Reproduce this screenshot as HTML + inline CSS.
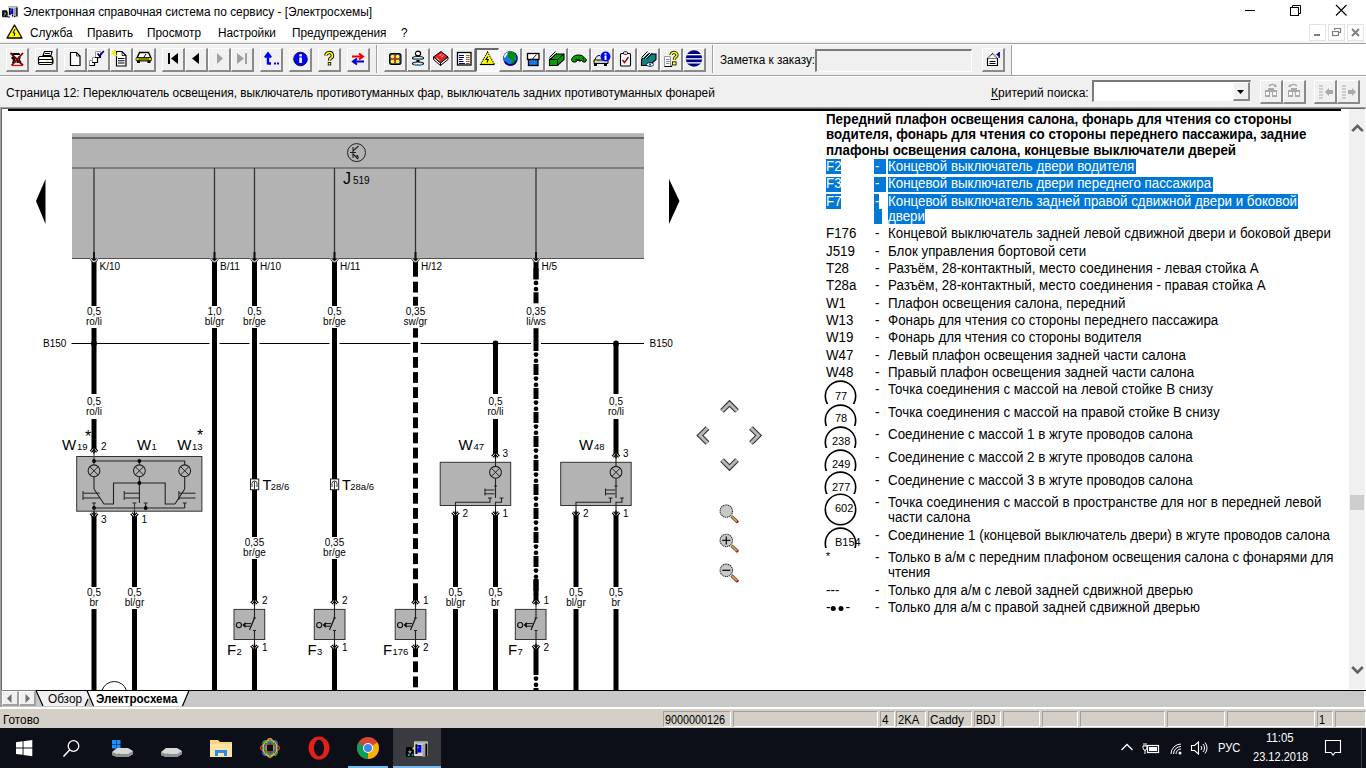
<!DOCTYPE html><html><head><meta charset="utf-8"><style>
html,body{margin:0;padding:0;width:1366px;height:768px;overflow:hidden;background:#fff;font-family:"Liberation Sans",sans-serif}
</style></head><body><div style="position:absolute;left:0px;top:0px;width:1366px;height:41px;background:#fff"></div>
<div style="position:absolute;left:0px;top:41px;width:1366px;height:2px;background:#f4f4f4"></div>
<div style="position:absolute;left:0px;top:43px;width:1366px;height:1px;background:#a0a0a0"></div>
<div style="position:absolute;left:0px;top:44px;width:1366px;height:1px;background:#fff"></div>
<div style="position:absolute;left:0px;top:45px;width:1366px;height:30px;background:#f0f0f0"></div>
<div style="position:absolute;left:1012px;top:45px;width:354px;height:30px;background:#fff"></div>
<div style="position:absolute;left:0px;top:75px;width:1366px;height:1px;background:#a0a0a0"></div>
<div style="position:absolute;left:0px;top:76px;width:1366px;height:1px;background:#fff"></div>
<div style="position:absolute;left:0px;top:77px;width:1366px;height:30px;background:#f0f0f0"></div>
<div style="position:absolute;left:0px;top:107px;width:1366px;height:1px;background:#a0a0a0"></div>
<div style="position:absolute;left:0px;top:108px;width:1366px;height:582px;background:#fff"></div>
<div style="position:absolute;left:1px;top:108px;width:1364px;height:1px;background:#696969"></div>
<div style="position:absolute;left:0px;top:107px;width:1px;height:600px;background:#a0a0a0"></div>
<div style="position:absolute;left:1px;top:108px;width:1px;height:582px;background:#696969"></div>
<div style="position:absolute;left:1px;top:690px;width:1px;height:17px;background:#a0a0a0"></div>
<svg style="position:absolute;left:0px;top:2px;" width="22" height="18" viewBox="0 0 22 18"><rect x="8" y="4" width="10" height="10.5" fill="#d8d8d8"/><rect x="8.5" y="4" width="9" height="1.5" fill="#b0b0b0"/>
<rect x="9" y="6" width="1.5" height="7" fill="#000"/><rect x="10.3" y="6.5" width="3" height="5.5" fill="#0000f0"/><rect x="10.5" y="7.8" width="1" height="1" fill="#3cf"/>
<rect x="14" y="6" width="2" height="9" fill="#a0a0a0"/><rect x="16.2" y="5.5" width="1.4" height="9" fill="#000"/><rect x="12" y="12.5" width="1.2" height="2" fill="#000"/><rect x="14" y="14" width="1.2" height="1.2" fill="#000"/>
<path d="M2.2 8.2h4.5l1 1v4.5l1 1.5H2.5l-.5-1.5z" fill="#000"/><path d="M5 9.5l.5 1.3 1.2.3-1 .7.3 1.2-1-.6-1 .6.3-1.2-1-.7 1.2-.3z" fill="#888"/>
<rect x="7" y="8.3" width="1.6" height="1.4" fill="#ff0"/><rect x="3.5" y="13.2" width="1.3" height="1.2" fill="#2cd"/><rect x="6.3" y="13.2" width="1.3" height="1.2" fill="#2a8"/><rect x="8" y="14.5" width="2" height="1" fill="#408"/></svg>
<div style="position:absolute;left:23px;top:5.84px;font-size:12px;line-height:1;font-weight:400;color:#000;white-space:pre;transform:scaleX(0.99);transform-origin:0 0;">Электронная справочная система по сервису - [Электросхемы]</div>
<div style="position:absolute;left:1245px;top:10px;width:10px;height:1px;background:#000"></div>
<svg style="position:absolute;left:1289px;top:4px;" width="13" height="13" viewBox="0 0 13 13"><rect x="1.5" y="3.5" width="8" height="8" fill="none" stroke="#000"/><path d="M3.5 3.5V1.5h8v8h-2" fill="none" stroke="#000"/></svg>
<svg style="position:absolute;left:1335px;top:4px;" width="13" height="13" viewBox="0 0 13 13"><path d="M1 1L11.5 11.5M11.5 1L1 11.5" stroke="#000" stroke-width="1.1"/></svg>
<svg style="position:absolute;left:6px;top:24px;" width="17" height="15" viewBox="0 0 17 15"><path d="M8.5 1L16 14H1z" fill="#ffff00" stroke="#000" stroke-width="1.3" stroke-linejoin="round"/><path d="M9 5l-2 4h2l-1 3" stroke="#000" fill="none" stroke-width="1"/></svg>
<div style="position:absolute;left:30px;top:27.04px;font-size:12px;line-height:1;font-weight:400;color:#000;white-space:pre;transform:scaleX(0.985);transform-origin:0 0;">Служба</div>
<div style="position:absolute;left:87px;top:27.04px;font-size:12px;line-height:1;font-weight:400;color:#000;white-space:pre;transform:scaleX(0.985);transform-origin:0 0;">Править</div>
<div style="position:absolute;left:147px;top:27.04px;font-size:12px;line-height:1;font-weight:400;color:#000;white-space:pre;transform:scaleX(0.985);transform-origin:0 0;">Просмотр</div>
<div style="position:absolute;left:218px;top:27.04px;font-size:12px;line-height:1;font-weight:400;color:#000;white-space:pre;transform:scaleX(0.985);transform-origin:0 0;">Настройки</div>
<div style="position:absolute;left:292px;top:27.04px;font-size:12px;line-height:1;font-weight:400;color:#000;white-space:pre;transform:scaleX(0.985);transform-origin:0 0;">Предупреждения</div>
<div style="position:absolute;left:401px;top:27.04px;font-size:12px;line-height:1;font-weight:400;color:#000;white-space:pre;transform:scaleX(0.985);transform-origin:0 0;">?</div>
<div style="position:absolute;left:1309px;top:24px;width:17px;height:17px;box-sizing:border-box;border:1px solid #e3e3e3;background:#fff"></div>
<div style="position:absolute;left:1328px;top:24px;width:17px;height:17px;box-sizing:border-box;border:1px solid #e3e3e3;background:#fff"></div>
<div style="position:absolute;left:1347px;top:24px;width:17px;height:17px;box-sizing:border-box;border:1px solid #e3e3e3;background:#fff"></div>
<svg style="position:absolute;left:1309px;top:24px;" width="17" height="17" viewBox="0 0 17 17"><rect x="5" y="10" width="6" height="2" fill="#808080"/></svg>
<svg style="position:absolute;left:1328px;top:24px;" width="17" height="17" viewBox="0 0 17 17"><rect x="4.5" y="7.5" width="6" height="4" fill="none" stroke="#808080" stroke-width="1.2"/><path d="M6.5 6V4.5h6v4h-2" fill="none" stroke="#808080" stroke-width="1.2"/></svg>
<svg style="position:absolute;left:1347px;top:24px;" width="17" height="17" viewBox="0 0 17 17"><path d="M5 5l7 7M12 5l-7 7" stroke="#808080" stroke-width="2"/></svg>
<div style="position:absolute;left:6px;top:48px;width:23px;height:24px;box-sizing:border-box;background:#f0f0f0;border-top:1px solid #fff;border-left:1px solid #fff;border-right:2px solid #8a8a8a;border-bottom:2px solid #8a8a8a"></div>
<svg style="position:absolute;left:6px;top:48px;" width="23" height="23" viewBox="0 0 23 23"><path d="M6 5h7l1 1v1H9l-1 2 2 1-1 2 3 1 1 2H6l1-3-2-2 2-2z" fill="#000"/><path d="M8 7.5h3M9 11h2M8 14h3" stroke="#fff" stroke-width="1"/><path d="M12 9l2 1-1 2 2 2" stroke="#000" stroke-width="1.2" fill="none"/><path d="M4.5 5L17 17.5M17 5L5.5 17.5" stroke="#800000" stroke-width="1.8"/><path d="M6 17.5h10" stroke="#f00" stroke-width="1.2"/></svg>
<div style="position:absolute;left:35px;top:48px;width:23px;height:24px;box-sizing:border-box;background:#f0f0f0;border-top:1px solid #fff;border-left:1px solid #fff;border-right:2px solid #8a8a8a;border-bottom:2px solid #8a8a8a"></div>
<svg style="position:absolute;left:35px;top:48px;" width="23" height="23" viewBox="0 0 23 23"><path d="M9.5 3.5h7.5l-1 4h-8z" fill="#fff" stroke="#000" stroke-width="1.1"/><path d="M10 5.5h5" stroke="#000"/><rect x="3.5" y="8.5" width="14" height="8" rx="1.5" fill="#fff" stroke="#000" stroke-width="1.2"/><path d="M4 11.5h13M4 14.5h13" stroke="#000" stroke-width="1.2"/><path d="M11 13h3" stroke="#ee0" stroke-width="1.3"/><path d="M16 9.5l2 2v4" stroke="#000" fill="none"/></svg>
<div style="position:absolute;left:64px;top:48px;width:23px;height:24px;box-sizing:border-box;background:#f0f0f0;border-top:1px solid #fff;border-left:1px solid #fff;border-right:2px solid #8a8a8a;border-bottom:2px solid #8a8a8a"></div>
<svg style="position:absolute;left:64px;top:48px;" width="23" height="23" viewBox="0 0 23 23"><path d="M6.5 4.5h6l3.5 3.5v9.5H6.5z" fill="#fff" stroke="#000" stroke-width="1.2"/><path d="M12.5 4.5V8H16" fill="none" stroke="#000" stroke-width=".8"/></svg>
<div style="position:absolute;left:87px;top:48px;width:23px;height:24px;box-sizing:border-box;background:#f0f0f0;border-top:1px solid #fff;border-left:1px solid #fff;border-right:2px solid #8a8a8a;border-bottom:2px solid #8a8a8a"></div>
<svg style="position:absolute;left:87px;top:48px;" width="23" height="23" viewBox="0 0 23 23"><path d="M2.5 12.5h5v5h-5z" fill="#fff" stroke="#999"/><path d="M2.5 17.5h5v-5" stroke="#000" fill="none" stroke-width="1.2"/><path d="M5.5 9.5h5v5h-5z" fill="#fff" stroke="#999"/><path d="M5 14.5h5.5v-5" stroke="#000" fill="none" stroke-width="1.2"/><path d="M8.5 3.5h5v6h-5z" fill="#fff" stroke="#999"/><path d="M8 9.5h5.5V7" stroke="#000" fill="none" stroke-width="1.2"/><path d="M10.5 5.5l2 2.3 4.3-4.8" stroke="#000080" stroke-width="1.8" fill="none"/></svg>
<div style="position:absolute;left:110px;top:48px;width:23px;height:24px;box-sizing:border-box;background:#f0f0f0;border-top:1px solid #fff;border-left:1px solid #fff;border-right:2px solid #8a8a8a;border-bottom:2px solid #8a8a8a"></div>
<svg style="position:absolute;left:110px;top:48px;" width="23" height="23" viewBox="0 0 23 23"><path d="M6.5 3.5h5.5l4 4v10.5H6.5z" fill="#fff" stroke="#000" stroke-width="1.2"/><path d="M12 3.5V7.5H16" fill="none" stroke="#000" stroke-width=".8"/><path d="M8 10.5h6.5M8 12.8h6.5M8 15h6.5" stroke="#000" stroke-width="1.1"/><path d="M2 3l5 5M6 2L3 7M1.5 5.5h5M4.5 1.5v6" stroke="#f0f000" stroke-width="1.1"/></svg>
<div style="position:absolute;left:133px;top:48px;width:23px;height:24px;box-sizing:border-box;background:#f0f0f0;border-top:1px solid #fff;border-left:1px solid #fff;border-right:2px solid #8a8a8a;border-bottom:2px solid #8a8a8a"></div>
<svg style="position:absolute;left:133px;top:48px;" width="23" height="23" viewBox="0 0 23 23"><path d="M4 10l2.5-5.5h9L18 10" fill="#fff" stroke="#000" stroke-width="1.4"/><path d="M11 9l2-3" stroke="#000"/><rect x="3" y="9.5" width="15.5" height="3.5" rx="1.5" fill="#808000" stroke="#000" stroke-width=".8"/><rect x="3.5" y="10.3" width="2" height="1.5" fill="#ff0"/><rect x="16" y="10.3" width="2" height="1.5" fill="#ff0"/><rect x="4" y="12.5" width="3" height="2.5" fill="#000"/><rect x="14.5" y="12.5" width="3" height="2.5" fill="#000"/></svg>
<div style="position:absolute;left:162px;top:48px;width:23px;height:24px;box-sizing:border-box;background:#f0f0f0;border-top:1px solid #fff;border-left:1px solid #fff;border-right:2px solid #8a8a8a;border-bottom:2px solid #8a8a8a"></div>
<svg style="position:absolute;left:162px;top:48px;" width="23" height="23" viewBox="0 0 23 23"><rect x="6" y="5" width="2" height="11" fill="#000"/><path d="M16 5v11L9 10.5z" fill="#000"/></svg>
<div style="position:absolute;left:185px;top:48px;width:23px;height:24px;box-sizing:border-box;background:#f0f0f0;border-top:1px solid #fff;border-left:1px solid #fff;border-right:2px solid #8a8a8a;border-bottom:2px solid #8a8a8a"></div>
<svg style="position:absolute;left:185px;top:48px;" width="23" height="23" viewBox="0 0 23 23"><path d="M14 5v11L7 10.5z" fill="#000"/></svg>
<div style="position:absolute;left:208px;top:48px;width:23px;height:24px;box-sizing:border-box;background:#f0f0f0;border-top:1px solid #fff;border-left:1px solid #fff;border-right:2px solid #8a8a8a;border-bottom:2px solid #8a8a8a"></div>
<svg style="position:absolute;left:208px;top:48px;" width="23" height="23" viewBox="0 0 23 23"><path d="M9 5v11l6-5.5z" fill="#a0a0a0"/></svg>
<div style="position:absolute;left:231px;top:48px;width:23px;height:24px;box-sizing:border-box;background:#f0f0f0;border-top:1px solid #fff;border-left:1px solid #fff;border-right:2px solid #8a8a8a;border-bottom:2px solid #8a8a8a"></div>
<svg style="position:absolute;left:231px;top:48px;" width="23" height="23" viewBox="0 0 23 23"><path d="M6 5v11l7-5.5z" fill="#a0a0a0"/><rect x="14" y="5" width="2" height="11" fill="#a0a0a0"/></svg>
<div style="position:absolute;left:260px;top:48px;width:23px;height:24px;box-sizing:border-box;background:#f0f0f0;border-top:1px solid #fff;border-left:1px solid #fff;border-right:2px solid #8a8a8a;border-bottom:2px solid #8a8a8a"></div>
<svg style="position:absolute;left:260px;top:48px;" width="23" height="23" viewBox="0 0 23 23"><path d="M8 16.5V6.5M5 9.5l3-4 3 4M8 15.5h3" stroke="#00f" stroke-width="2.4" fill="none"/><rect x="14" y="14.5" width="2" height="2" fill="#00f"/><rect x="17" y="14.5" width="2" height="2" fill="#00f"/></svg>
<div style="position:absolute;left:289px;top:48px;width:23px;height:24px;box-sizing:border-box;background:#f0f0f0;border-top:1px solid #fff;border-left:1px solid #fff;border-right:2px solid #8a8a8a;border-bottom:2px solid #8a8a8a"></div>
<svg style="position:absolute;left:289px;top:48px;" width="23" height="23" viewBox="0 0 23 23"><circle cx="11.5" cy="11" r="6.8" fill="#00f" stroke="#000" stroke-width=".8"/><rect x="10.3" y="9.5" width="2.6" height="5.5" fill="#fff"/><rect x="10.3" y="6.2" width="2.6" height="2.2" fill="#fff"/></svg>
<div style="position:absolute;left:318px;top:48px;width:23px;height:24px;box-sizing:border-box;background:#f0f0f0;border-top:1px solid #fff;border-left:1px solid #fff;border-right:2px solid #8a8a8a;border-bottom:2px solid #8a8a8a"></div>
<svg style="position:absolute;left:318px;top:48px;" width="23" height="23" viewBox="0 0 23 23"><path d="M8 7.5a3.2 3 0 1 1 4.5 2.8c-1 .6-1 1.2-1 2.5" stroke="#000" stroke-width="3.4" fill="none"/><path d="M8 7.5a3.2 3 0 1 1 4.5 2.8c-1 .6-1 1.2-1 2.5" stroke="#ff0" stroke-width="1.6" fill="none"/><rect x="9.8" y="14" width="3.4" height="3.4" fill="#000"/><rect x="10.6" y="14.8" width="1.8" height="1.8" fill="#ff0"/></svg>
<div style="position:absolute;left:347px;top:48px;width:23px;height:24px;box-sizing:border-box;background:#f0f0f0;border-top:1px solid #fff;border-left:1px solid #fff;border-right:2px solid #8a8a8a;border-bottom:2px solid #8a8a8a"></div>
<svg style="position:absolute;left:347px;top:48px;" width="23" height="23" viewBox="0 0 23 23"><path d="M5 8.5h10M12 5.5l4 3-4 3" stroke="#e00" stroke-width="2" fill="none"/><path d="M17 13.5H7M10 10.5l-4 3 4 3" stroke="#00c" stroke-width="2" fill="none"/></svg>
<div style="position:absolute;left:384px;top:48px;width:23px;height:24px;box-sizing:border-box;background:#f0f0f0;border-top:1px solid #fff;border-left:1px solid #fff;border-right:2px solid #8a8a8a;border-bottom:2px solid #8a8a8a"></div>
<svg style="position:absolute;left:384px;top:48px;" width="23" height="23" viewBox="0 0 23 23"><rect x="5" y="5" width="12.5" height="12" rx="2.5" fill="#000"/><rect x="6" y="6" width="10.5" height="10" rx="1.5" fill="#2040a0"/><circle cx="8.6" cy="8.6" r="1.9" fill="#ff0"/><circle cx="13.6" cy="8.6" r="1.9" fill="#ff0"/><circle cx="8.6" cy="13.4" r="1.9" fill="#ff0"/><circle cx="13.6" cy="13.4" r="1.9" fill="#ff0"/><path d="M6 11h10.5M11 6v10" stroke="#e03030" stroke-width="1.2"/></svg>
<div style="position:absolute;left:407px;top:48px;width:23px;height:24px;box-sizing:border-box;background:#f0f0f0;border-top:1px solid #fff;border-left:1px solid #fff;border-right:2px solid #8a8a8a;border-bottom:2px solid #8a8a8a"></div>
<svg style="position:absolute;left:407px;top:48px;" width="23" height="23" viewBox="0 0 23 23"><ellipse cx="11" cy="5.5" rx="2.6" ry="2.3" fill="#fff" stroke="#000" stroke-width="1.2"/><path d="M5.5 10c0-2 11-2 11 0s-11 2-11 0z" fill="#fff" stroke="#000" stroke-width="1.2"/><path d="M7 10.5c2 1 6 1 8 0" stroke="#5ad" stroke-width="1.5"/><ellipse cx="11" cy="13" rx="1.8" ry="1.3" fill="#000"/><path d="M5.5 15.5c0-2 11-2 11 0s-11 2-11 0z" fill="#fff" stroke="#000" stroke-width="1.2"/><path d="M7 16c2 1 6 1 8 0" stroke="#5ad" stroke-width="1.5"/></svg>
<div style="position:absolute;left:430px;top:48px;width:23px;height:24px;box-sizing:border-box;background:#f0f0f0;border-top:1px solid #fff;border-left:1px solid #fff;border-right:2px solid #8a8a8a;border-bottom:2px solid #8a8a8a"></div>
<svg style="position:absolute;left:430px;top:48px;" width="23" height="23" viewBox="0 0 23 23"><path d="M3.5 9L11 3.5l7 5.5-7.5 6z" fill="#e82020" stroke="#000" stroke-width="1"/><path d="M3.5 9v2.5l7 6 7.5-6V9l-7.5 6z" fill="#fff" stroke="#000" stroke-width="1"/><path d="M10.5 15v2.5" stroke="#000"/><path d="M9.5 7.5l2-1.2M11.5 8.8l2-1.2M6.5 10l3 2.5" stroke="#fff" stroke-width=".9"/></svg>
<div style="position:absolute;left:453px;top:48px;width:23px;height:24px;box-sizing:border-box;background:#f0f0f0;border-top:1px solid #fff;border-left:1px solid #fff;border-right:2px solid #8a8a8a;border-bottom:2px solid #8a8a8a"></div>
<svg style="position:absolute;left:453px;top:48px;" width="23" height="23" viewBox="0 0 23 23"><rect x="4.5" y="4.5" width="13.5" height="12.5" fill="#fff" stroke="#000" stroke-width="1.3"/><path d="M6 7.5h5M6 9.5h5M6 11.5h3.5M6 13.5h4.5M6 15.5h6" stroke="#000080" stroke-width="1.1"/><path d="M13 7.5h1.5M13 9.5h1.5M13 11.5h1.5M13 13.5h1.5" stroke="#00a000" stroke-width="1.1"/><path d="M14.5 7.5h2M14.5 9.5h2M14.5 11.5h2M14.5 13.5h2M13 15.5h3.5" stroke="#e02020" stroke-width="1.1"/></svg>
<div style="position:absolute;left:475px;top:48px;width:24px;height:24px;box-sizing:border-box;background:#f8f8f8;border-top:2px solid #696969;border-left:2px solid #696969;border-right:1px solid #fff;border-bottom:1px solid #fff"></div>
<svg style="position:absolute;left:476px;top:48px;" width="23" height="23" viewBox="0 0 23 23"><path d="M11.5 4l7 12.5H4.5z" fill="#ff0" stroke="#000" stroke-width="1.1" stroke-dasharray="1.2 .9"/><path d="M4.5 16.5h14" stroke="#000" stroke-width="1.2"/><path d="M12 8.5l-2 3h2.2l-1.2 3" stroke="#000" fill="none" stroke-width="1.1"/></svg>
<div style="position:absolute;left:499px;top:48px;width:23px;height:24px;box-sizing:border-box;background:#f0f0f0;border-top:1px solid #fff;border-left:1px solid #fff;border-right:2px solid #8a8a8a;border-bottom:2px solid #8a8a8a"></div>
<svg style="position:absolute;left:499px;top:48px;" width="23" height="23" viewBox="0 0 23 23"><circle cx="11.5" cy="10.5" r="7.3" fill="#000080"/><circle cx="11" cy="10" r="6.5" fill="#1878e8"/><path d="M9 4.5c2-1 5-1 7 1l1 3-2 2 1 2-2 3-2-1 1-3-3-1-1-2z" fill="#009000"/><path d="M4.8 9.5a6.5 6.5 0 0 1 4-5.2l-1 3-2 2.5z" fill="#fff"/><path d="M6 14c2 3 6 3.5 9 2l2-3" stroke="#000080" stroke-width="1.5" fill="none"/></svg>
<div style="position:absolute;left:522px;top:48px;width:23px;height:24px;box-sizing:border-box;background:#f0f0f0;border-top:1px solid #fff;border-left:1px solid #fff;border-right:2px solid #8a8a8a;border-bottom:2px solid #8a8a8a"></div>
<svg style="position:absolute;left:522px;top:48px;" width="23" height="23" viewBox="0 0 23 23"><rect x="5.5" y="5.5" width="11.5" height="6" fill="#fff" stroke="#000" stroke-width="1.3"/><path d="M10.5 11l4-4.5" stroke="#000" stroke-width=".9"/><rect x="6.5" y="11.5" width="9.5" height="6" fill="#1878e8" stroke="#000" stroke-width="1.3"/></svg>
<div style="position:absolute;left:545px;top:48px;width:23px;height:24px;box-sizing:border-box;background:#f0f0f0;border-top:1px solid #fff;border-left:1px solid #fff;border-right:2px solid #8a8a8a;border-bottom:2px solid #8a8a8a"></div>
<svg style="position:absolute;left:545px;top:48px;" width="23" height="23" viewBox="0 0 23 23"><path d="M4.5 11.5l6-5.5h8.5v5.5l-6.5 6h-8z" fill="#00a000" stroke="#000" stroke-width="1.1"/><path d="M4.5 11.5h8l6.5-5.5M12.5 11.5v6" stroke="#000" fill="none" stroke-width="1"/><path d="M4.5 9.5l6-6M6 11l6-6" stroke="#000" stroke-width="1"/><path d="M5.2 10.2l6-6" stroke="#fff" stroke-width=".9"/></svg>
<div style="position:absolute;left:568px;top:48px;width:23px;height:24px;box-sizing:border-box;background:#f0f0f0;border-top:1px solid #fff;border-left:1px solid #fff;border-right:2px solid #8a8a8a;border-bottom:2px solid #8a8a8a"></div>
<svg style="position:absolute;left:568px;top:48px;" width="23" height="23" viewBox="0 0 23 23"><path d="M3.5 12.5c0-3 2.5-5.5 7-5.5 3.5 0 5 1.5 6.5 3.5l1.5 1-1 2.5h-2.5l-1-1.5h-5l-1 1.5H5z" fill="#00a000" stroke="#000" stroke-width="1"/><path d="M7 11.5h2.5v1.5M11 10.5v2.5h2M14.5 10.5l1.5 1" stroke="#000" stroke-width="1" fill="none"/></svg>
<div style="position:absolute;left:591px;top:48px;width:23px;height:24px;box-sizing:border-box;background:#f0f0f0;border-top:1px solid #fff;border-left:1px solid #fff;border-right:2px solid #8a8a8a;border-bottom:2px solid #8a8a8a"></div>
<svg style="position:absolute;left:591px;top:48px;" width="23" height="23" viewBox="0 0 23 23"><path d="M3.5 13l1.5-3.5c1-2 3-2 4-2" stroke="#000" fill="none" stroke-width="1"/><path d="M3 12h14v3.5H3z" fill="#c8c8c8" stroke="#000" stroke-width="1"/><rect x="4" y="12.5" width="1.5" height="1.3" fill="#ff0"/><rect x="14" y="12.5" width="1.5" height="1.3" fill="#ff0"/><rect x="3" y="15.5" width="3" height="2.5" fill="#000"/><rect x="13" y="15.5" width="3" height="2.5" fill="#000"/><circle cx="14.5" cy="8.5" r="5" fill="#0000f0"/><rect x="13.5" y="7.5" width="2" height="4.5" fill="#fff"/><rect x="13.5" y="5" width="2" height="1.6" fill="#fff"/></svg>
<div style="position:absolute;left:614px;top:48px;width:23px;height:24px;box-sizing:border-box;background:#f0f0f0;border-top:1px solid #fff;border-left:1px solid #fff;border-right:2px solid #8a8a8a;border-bottom:2px solid #8a8a8a"></div>
<svg style="position:absolute;left:614px;top:48px;" width="23" height="23" viewBox="0 0 23 23"><rect x="6.5" y="5.5" width="10" height="12.5" rx="1" fill="#fff" stroke="#000" stroke-width="1.1"/><rect x="9.5" y="3.8" width="4" height="2.5" rx=".8" fill="#fff" stroke="#000" stroke-width=".9"/><path d="M8.5 12l2 2.5 4-5.5" stroke="#a00000" stroke-width="1.4" fill="none"/></svg>
<div style="position:absolute;left:637px;top:48px;width:23px;height:24px;box-sizing:border-box;background:#f0f0f0;border-top:1px solid #fff;border-left:1px solid #fff;border-right:2px solid #8a8a8a;border-bottom:2px solid #8a8a8a"></div>
<svg style="position:absolute;left:637px;top:48px;" width="23" height="23" viewBox="0 0 23 23"><path d="M4.5 11.5l6-5.5h8.5v5.5l-6.5 6h-8z" fill="#108080" stroke="#000" stroke-width="1.1"/><path d="M4.5 9.5l6-6M7 11l6-6M9.5 11l6-6" stroke="#000" stroke-width="1"/><path d="M6 10l6-6M8.5 10.5l6-6" stroke="#e0e0e0" stroke-width="1"/><path d="M9 16.5c2-2.5 6-2.5 8 0-2 2.5-6 2.5-8 0z" fill="#fff" stroke="#000" stroke-width=".8"/><rect x="12" y="15.5" width="2" height="2" fill="#0060e0"/></svg>
<div style="position:absolute;left:660px;top:48px;width:23px;height:24px;box-sizing:border-box;background:#f0f0f0;border-top:1px solid #fff;border-left:1px solid #fff;border-right:2px solid #8a8a8a;border-bottom:2px solid #8a8a8a"></div>
<svg style="position:absolute;left:660px;top:48px;" width="23" height="23" viewBox="0 0 23 23"><path d="M4.5 8.5h6v10h-6z" fill="#fff" stroke="#999" stroke-width="1"/><path d="M4.5 18.5h7v-1" stroke="#000" stroke-width="1.2" fill="none"/><path d="M6 11.5h3.5M6 13.5h3.5M6 15.5h3.5" stroke="#888" stroke-width="1"/><path d="M11 7a3 2.6 0 1 1 4.5 2.3c-1 .6-1.2 1.2-1.2 2.5" stroke="#000" stroke-width="3.2" fill="none"/><path d="M11 7a3 2.6 0 1 1 4.5 2.3c-1 .6-1.2 1.2-1.2 2.5" stroke="#ff0" stroke-width="1.6" fill="none"/><rect x="12.5" y="13.8" width="3.6" height="3.2" fill="#ff0" stroke="#000" stroke-width=".8"/></svg>
<div style="position:absolute;left:683px;top:48px;width:23px;height:24px;box-sizing:border-box;background:#f0f0f0;border-top:1px solid #fff;border-left:1px solid #fff;border-right:2px solid #8a8a8a;border-bottom:2px solid #8a8a8a"></div>
<svg style="position:absolute;left:683px;top:48px;" width="23" height="23" viewBox="0 0 23 23"><clipPath id="cg"><circle cx="11" cy="10.5" r="8.2"/></clipPath><g clip-path="url(#cg)"><rect x="2" y="2" width="18" height="17" fill="#000080"/><rect x="2" y="6" width="18" height="1.3" fill="#fff"/><rect x="2" y="10.2" width="18" height="1.3" fill="#fff"/><rect x="2" y="14.2" width="18" height="1.3" fill="#fff"/></g></svg>
<div style="position:absolute;left:376px;top:45px;width:1px;height:28px;background:#a0a0a0"></div>
<div style="position:absolute;left:377px;top:45px;width:1px;height:28px;background:#fff"></div>
<div style="position:absolute;left:712px;top:45px;width:1px;height:28px;background:#a0a0a0"></div>
<div style="position:absolute;left:713px;top:45px;width:1px;height:28px;background:#fff"></div>
<div style="position:absolute;left:720px;top:53.84px;font-size:12px;line-height:1;font-weight:400;color:#000;white-space:pre;transform:scaleX(0.98);transform-origin:0 0;">Заметка к заказу:</div>
<div style="position:absolute;left:815px;top:49px;width:157px;height:23px;box-sizing:border-box;background:#f0f0f0;border-top:2px solid #7a7a7a;border-left:2px solid #7a7a7a;border-right:1px solid #fff;border-bottom:1px solid #fff"></div>
<div style="position:absolute;left:982px;top:48px;width:23px;height:24px;box-sizing:border-box;background:#f0f0f0;border-top:1px solid #fff;border-left:1px solid #fff;border-right:2px solid #8a8a8a;border-bottom:2px solid #8a8a8a"></div>
<svg style="position:absolute;left:982px;top:48px;" width="23" height="23" viewBox="0 0 23 23"><path d="M5.5 10.5h10v7h-10z" fill="#fff" stroke="#000" stroke-width="1.1"/><path d="M7.5 13.5h6M7.5 15.5h6" stroke="#000" stroke-width="1"/><path d="M5.5 10.5l5-5 5 5" fill="#fff" stroke="#000" stroke-width="1.1" stroke-dasharray="1 .7"/><path d="M14 6.5l3.5-2.5v5z" fill="#000080"/><rect x="16.5" y="4" width="1.3" height="6" fill="#000080"/></svg>
<div style="position:absolute;left:1011px;top:45px;width:1px;height:30px;background:#a0a0a0"></div>
<div style="position:absolute;left:6px;top:86.84px;font-size:12px;line-height:1;font-weight:400;color:#000;white-space:pre;transform:scaleX(0.989);transform-origin:0 0;">Страница 12: Переключатель освещения, выключатель противотуманных фар, выключатель задних противотуманных фонарей</div>
<div style="position:absolute;left:991px;top:86.84px;font-size:12px;line-height:1;font-weight:400;color:#000;white-space:pre;transform:scaleX(1.005);transform-origin:0 0;">Критерий поиска:</div>
<div style="position:absolute;left:991px;top:98.5px;width:7px;height:1px;background:#000"></div>
<div style="position:absolute;left:1092px;top:80px;width:159px;height:22px;box-sizing:border-box;background:#fff;border-top:2px solid #7a7a7a;border-left:2px solid #7a7a7a;border-right:1px solid #f0f0f0;border-bottom:1px solid #f0f0f0"></div>
<div style="position:absolute;left:1233px;top:82px;width:17px;height:19px;box-sizing:border-box;background:#f0f0f0;border-top:1px solid #fff;border-left:1px solid #fff;border-right:2px solid #8a8a8a;border-bottom:2px solid #8a8a8a"></div>
<svg style="position:absolute;left:1233px;top:82px;" width="17" height="19" viewBox="0 0 17 19"><path d="M4 8h7l-3.5 4z" fill="#000"/></svg>
<div style="position:absolute;left:1260px;top:80px;width:23px;height:24px;box-sizing:border-box;background:#f0f0f0;border-top:1px solid #fff;border-left:1px solid #fff;border-right:2px solid #8a8a8a;border-bottom:2px solid #8a8a8a"></div>
<div style="position:absolute;left:1283px;top:80px;width:23px;height:24px;box-sizing:border-box;background:#f0f0f0;border-top:1px solid #fff;border-left:1px solid #fff;border-right:2px solid #8a8a8a;border-bottom:2px solid #8a8a8a"></div>
<div style="position:absolute;left:1314px;top:80px;width:23px;height:24px;box-sizing:border-box;background:#f0f0f0;border-top:1px solid #fff;border-left:1px solid #fff;border-right:2px solid #8a8a8a;border-bottom:2px solid #8a8a8a"></div>
<div style="position:absolute;left:1337px;top:80px;width:23px;height:24px;box-sizing:border-box;background:#f0f0f0;border-top:1px solid #fff;border-left:1px solid #fff;border-right:2px solid #8a8a8a;border-bottom:2px solid #8a8a8a"></div>
<svg style="position:absolute;left:1260px;top:80px;" width="23" height="23" viewBox="0 0 23 23"><rect x="5" y="10" width="5" height="7" fill="#aaa"/><rect x="12" y="10" width="5" height="7" fill="#aaa"/><rect x="8" y="8" width="6" height="4" fill="#aaa"/><rect x="6" y="12" width="3" height="3" fill="#fff"/><rect x="13" y="12" width="3" height="3" fill="#fff"/><path d="M9 6a4 3 0 0 1 7 0" stroke="#aaa" stroke-width="1.5" fill="none"/><path d="M15 4l2 3-3 0z" fill="#aaa"/></svg>
<svg style="position:absolute;left:1283px;top:80px;" width="23" height="23" viewBox="0 0 23 23"><rect x="5" y="10" width="5" height="7" fill="#aaa"/><rect x="12" y="10" width="5" height="7" fill="#aaa"/><rect x="8" y="8" width="6" height="4" fill="#aaa"/><rect x="6" y="12" width="3" height="3" fill="#fff"/><rect x="13" y="12" width="3" height="3" fill="#fff"/><path d="M7 6a4 3 0 0 1 7 0" stroke="#aaa" stroke-width="1.5" fill="none"/><path d="M7 4l-2 3 3 0z" fill="#aaa"/></svg>
<svg style="position:absolute;left:1314px;top:80px;" width="23" height="23" viewBox="0 0 23 23"><path d="M5 6h4M5 9h4M5 12h4M5 15h4M5 18h4" stroke="#aaa"/><path d="M11 12l4-4v2h4v4h-4v2z" fill="#aaa"/></svg>
<svg style="position:absolute;left:1337px;top:80px;" width="23" height="23" viewBox="0 0 23 23"><path d="M5 6h4M5 9h4M5 12h4M5 15h4M5 18h4" stroke="#aaa"/><path d="M19 12l-4-4v2h-4v4h4v2z" fill="#aaa"/></svg>
<div style="position:absolute;left:8px;top:109px;width:1333px;height:2px;background:#000"></div>
<div style="position:absolute;left:1349px;top:109px;width:16px;height:580px;background:#f0f0f0"></div>
<svg style="position:absolute;left:1349px;top:120px;" width="16" height="16" viewBox="0 0 16 16"><path d="M3.2 11.2L8.5 5.8l5.3 5.4" stroke="#606060" stroke-width="2.6" fill="none"/></svg>
<svg style="position:absolute;left:1349px;top:662px;" width="16" height="16" viewBox="0 0 16 16"><path d="M3.2 5L8.5 10.4l5.3-5.4" stroke="#606060" stroke-width="2.6" fill="none"/></svg>
<div style="position:absolute;left:1350px;top:495px;width:14px;height:15px;background:#cdcdd0"></div>
<svg style="position:absolute;left:0;top:0" width="1366" height="768" viewBox="0 0 1366 768" font-family="Liberation Sans, sans-serif"><defs><clipPath id="cp"><rect x="2" y="111" width="810" height="579"/></clipPath></defs><g clip-path="url(#cp)"><rect x="72" y="133.5" width="572" height="125.5" fill="#b3b3b3"/><rect x="72" y="133" width="572" height="1" fill="#c4c4c4"/><line x1="72" y1="137.9" x2="644" y2="137.9" stroke="#505050" stroke-width="1.5"/><line x1="72" y1="168" x2="644" y2="168" stroke="#4a4a4a" stroke-width="1.2"/><line x1="72" y1="258.5" x2="644" y2="258.5" stroke="#505050" stroke-width="1"/><circle cx="356.5" cy="152.6" r="9" fill="none" stroke="#222" stroke-width="1"/><path d="M350 152.5h6M353 147v11M353 151l5.5-5M353 154l5 5" stroke="#222" stroke-width="1.1" fill="none"/><path d="M355.5 155.5l3.5 3.5-1-4z" fill="#222"/><text x="343" y="184.4" font-size="16" fill="#000">J</text><text x="353" y="184.4" font-size="10" fill="#000">519</text><line x1="94" y1="168" x2="94" y2="259" stroke="#333" stroke-width="1.3"/><text x="99.5" y="269.5" font-size="10" text-anchor="start" fill="#000">K/10</text><line x1="214.5" y1="168" x2="214.5" y2="259" stroke="#333" stroke-width="1.3"/><text x="220.0" y="269.5" font-size="10" text-anchor="start" fill="#000">B/11</text><line x1="254.5" y1="168" x2="254.5" y2="259" stroke="#333" stroke-width="1.3"/><text x="260.0" y="269.5" font-size="10" text-anchor="start" fill="#000">H/10</text><line x1="334.5" y1="168" x2="334.5" y2="259" stroke="#333" stroke-width="1.3"/><text x="340.0" y="269.5" font-size="10" text-anchor="start" fill="#000">H/11</text><line x1="415.5" y1="168" x2="415.5" y2="259" stroke="#333" stroke-width="1.3"/><text x="421.0" y="269.5" font-size="10" text-anchor="start" fill="#000">H/12</text><line x1="536" y1="168" x2="536" y2="259" stroke="#333" stroke-width="1.3"/><text x="541.5" y="269.5" font-size="10" text-anchor="start" fill="#000">H/5</text><path d="M36 201L45.5 179V224z" fill="#000"/><path d="M679.5 201L669 179V224z" fill="#000"/><line x1="71.5" y1="343.5" x2="209.5" y2="343.5" stroke="#000" stroke-width="1"/><line x1="219.5" y1="343.5" x2="249.5" y2="343.5" stroke="#000" stroke-width="1"/><line x1="259.5" y1="343.5" x2="329.5" y2="343.5" stroke="#000" stroke-width="1"/><line x1="339.5" y1="343.5" x2="410.5" y2="343.5" stroke="#000" stroke-width="1"/><line x1="420.5" y1="343.5" x2="531" y2="343.5" stroke="#000" stroke-width="1"/><line x1="541" y1="343.5" x2="644" y2="343.5" stroke="#000" stroke-width="1"/><circle cx="94" cy="343.5" r="2.9" fill="#000"/><circle cx="495.5" cy="343.5" r="2.9" fill="#000"/><circle cx="616" cy="343.5" r="2.9" fill="#000"/><text x="43" y="346.5" font-size="10" text-anchor="start" fill="#000">B150</text><text x="649.5" y="346.5" font-size="10" text-anchor="start" fill="#000">B150</text><rect x="91.5" y="259" width="5" height="47" fill="#000"/><rect x="91.5" y="328" width="5" height="66" fill="#000"/><rect x="91.5" y="419" width="5" height="30" fill="#000"/><rect x="91.5" y="515" width="5" height="72" fill="#000"/><rect x="91.5" y="609" width="5" height="81" fill="#000"/><rect x="132.0" y="515" width="5" height="72" fill="#000"/><rect x="132.0" y="609" width="5" height="81" fill="#000"/><rect x="212.0" y="259" width="5" height="47" fill="#000"/><rect x="212.0" y="328" width="5" height="362" fill="#000"/><rect x="252.0" y="259" width="5" height="47" fill="#000"/><rect x="252.0" y="328" width="5" height="209" fill="#000"/><rect x="252.0" y="559" width="5" height="42" fill="#000"/><rect x="252.0" y="647" width="5" height="43" fill="#000"/><rect x="332.0" y="259" width="5" height="47" fill="#000"/><rect x="332.0" y="328" width="5" height="209" fill="#000"/><rect x="332.0" y="559" width="5" height="42" fill="#000"/><rect x="332.0" y="647" width="5" height="43" fill="#000"/><rect x="493.0" y="343" width="5" height="51" fill="#000"/><rect x="493.0" y="419" width="5" height="36" fill="#000"/><rect x="493.0" y="514" width="5" height="73" fill="#000"/><rect x="493.0" y="609" width="5" height="81" fill="#000"/><rect x="613.5" y="343" width="5" height="51" fill="#000"/><rect x="613.5" y="419" width="5" height="36" fill="#000"/><rect x="613.5" y="514" width="5" height="73" fill="#000"/><rect x="613.5" y="609" width="5" height="81" fill="#000"/><rect x="453.0" y="514" width="5" height="73" fill="#000"/><rect x="453.0" y="609" width="5" height="81" fill="#000"/><rect x="573.5" y="514" width="5" height="73" fill="#000"/><rect x="573.5" y="609" width="5" height="81" fill="#000"/><rect x="413.0" y="259" width="5" height="17.69999999999999" fill="#000"/><rect x="413.0" y="281.7" width="5" height="10.800000000000011" fill="#000"/><rect x="413.0" y="296.8" width="5" height="8.899999999999977" fill="#000"/><rect x="413.0" y="328.2" width="5" height="9.399999999999977" fill="#000"/><rect x="413.0" y="341.9" width="5" height="10.800000000000011" fill="#000"/><rect x="413.0" y="357.0" width="5" height="10.800000000000011" fill="#000"/><rect x="413.0" y="372.1" width="5" height="10.800000000000011" fill="#000"/><rect x="413.0" y="387.20000000000005" width="5" height="10.800000000000011" fill="#000"/><rect x="413.0" y="402.30000000000007" width="5" height="10.800000000000011" fill="#000"/><rect x="413.0" y="417.4000000000001" width="5" height="10.800000000000011" fill="#000"/><rect x="413.0" y="432.5000000000001" width="5" height="10.800000000000011" fill="#000"/><rect x="413.0" y="447.60000000000014" width="5" height="10.800000000000011" fill="#000"/><rect x="413.0" y="462.70000000000016" width="5" height="10.800000000000011" fill="#000"/><rect x="413.0" y="477.8000000000002" width="5" height="10.800000000000011" fill="#000"/><rect x="413.0" y="492.9000000000002" width="5" height="10.800000000000011" fill="#000"/><rect x="413.0" y="508.0000000000002" width="5" height="10.799999999999955" fill="#000"/><rect x="413.0" y="523.1000000000003" width="5" height="10.799999999999955" fill="#000"/><rect x="413.0" y="538.2000000000003" width="5" height="10.799999999999955" fill="#000"/><rect x="413.0" y="553.3000000000003" width="5" height="10.799999999999955" fill="#000"/><rect x="413.0" y="568.4000000000003" width="5" height="10.799999999999955" fill="#000"/><rect x="413.0" y="583.5000000000003" width="5" height="10.799999999999955" fill="#000"/><rect x="413.0" y="583.5" width="5" height="17.5" fill="#000"/><rect x="413.0" y="646.3" width="5" height="10.799999999999955" fill="#000"/><rect x="413.0" y="661.4" width="5" height="10.799999999999955" fill="#000"/><rect x="413.0" y="676.5" width="5" height="10.799999999999955" fill="#000"/><rect x="533.5" y="259" width="5" height="20.30000000000001" fill="#000"/><rect x="533.5" y="268.3" width="5" height="11.0" fill="#000"/><circle cx="536" cy="282.90000000000003" r="2.35" fill="#000"/><circle cx="536" cy="289.1" r="2.35" fill="#000"/><rect x="533.5" y="292.3" width="5" height="11.0" fill="#000"/><rect x="533.5" y="328.2" width="5" height="22.80000000000001" fill="#000"/><circle cx="536" cy="354.6" r="2.35" fill="#000"/><circle cx="536" cy="360.8" r="2.35" fill="#000"/><rect x="533.5" y="364" width="5" height="11" fill="#000"/><circle cx="536" cy="378.6" r="2.35" fill="#000"/><circle cx="536" cy="384.8" r="2.35" fill="#000"/><rect x="533.5" y="388" width="5" height="11" fill="#000"/><circle cx="536" cy="402.6" r="2.35" fill="#000"/><circle cx="536" cy="408.8" r="2.35" fill="#000"/><rect x="533.5" y="412" width="5" height="11" fill="#000"/><circle cx="536" cy="426.6" r="2.35" fill="#000"/><circle cx="536" cy="432.8" r="2.35" fill="#000"/><rect x="533.5" y="436" width="5" height="11" fill="#000"/><circle cx="536" cy="450.6" r="2.35" fill="#000"/><circle cx="536" cy="456.8" r="2.35" fill="#000"/><rect x="533.5" y="460" width="5" height="11" fill="#000"/><circle cx="536" cy="474.6" r="2.35" fill="#000"/><circle cx="536" cy="480.8" r="2.35" fill="#000"/><rect x="533.5" y="484" width="5" height="11" fill="#000"/><circle cx="536" cy="498.6" r="2.35" fill="#000"/><circle cx="536" cy="504.8" r="2.35" fill="#000"/><rect x="533.5" y="508" width="5" height="11" fill="#000"/><circle cx="536" cy="522.6" r="2.35" fill="#000"/><circle cx="536" cy="528.8" r="2.35" fill="#000"/><rect x="533.5" y="532" width="5" height="11" fill="#000"/><circle cx="536" cy="546.6" r="2.35" fill="#000"/><circle cx="536" cy="552.8" r="2.35" fill="#000"/><rect x="533.5" y="556" width="5" height="11" fill="#000"/><circle cx="536" cy="570.6" r="2.35" fill="#000"/><circle cx="536" cy="576.8" r="2.35" fill="#000"/><rect x="533.5" y="580" width="5" height="11" fill="#000"/><circle cx="536" cy="594.6" r="2.35" fill="#000"/><rect x="533.5" y="579" width="5" height="22" fill="#000"/><rect x="533.5" y="647" width="5" height="28" fill="#000"/><circle cx="536" cy="678.6" r="2.35" fill="#000"/><circle cx="536" cy="684.8" r="2.35" fill="#000"/><rect x="533.5" y="688" width="5" height="2" fill="#000"/><rect x="93" y="252" width="2" height="7" fill="#111"/><path d="M90.4 258.3Q94 265 97.6 258.3" stroke="#444" stroke-width="2.2" fill="none"/><path d="M90.4 258.3Q94 265 97.6 258.3" stroke="#fff" stroke-width="0.9" fill="none"/><rect x="213.5" y="252" width="2" height="7" fill="#111"/><path d="M210.9 258.3Q214.5 265 218.1 258.3" stroke="#444" stroke-width="2.2" fill="none"/><path d="M210.9 258.3Q214.5 265 218.1 258.3" stroke="#fff" stroke-width="0.9" fill="none"/><rect x="253.5" y="252" width="2" height="7" fill="#111"/><path d="M250.9 258.3Q254.5 265 258.1 258.3" stroke="#444" stroke-width="2.2" fill="none"/><path d="M250.9 258.3Q254.5 265 258.1 258.3" stroke="#fff" stroke-width="0.9" fill="none"/><rect x="333.5" y="252" width="2" height="7" fill="#111"/><path d="M330.9 258.3Q334.5 265 338.1 258.3" stroke="#444" stroke-width="2.2" fill="none"/><path d="M330.9 258.3Q334.5 265 338.1 258.3" stroke="#fff" stroke-width="0.9" fill="none"/><rect x="414.5" y="252" width="2" height="7" fill="#111"/><path d="M411.9 258.3Q415.5 265 419.1 258.3" stroke="#444" stroke-width="2.2" fill="none"/><path d="M411.9 258.3Q415.5 265 419.1 258.3" stroke="#fff" stroke-width="0.9" fill="none"/><rect x="535" y="252" width="2" height="7" fill="#111"/><path d="M532.4 258.3Q536 265 539.6 258.3" stroke="#444" stroke-width="2.2" fill="none"/><path d="M532.4 258.3Q536 265 539.6 258.3" stroke="#fff" stroke-width="0.9" fill="none"/><text x="94" y="314.7" font-size="10" text-anchor="middle" fill="#000">0,5</text><text x="94" y="324.7" font-size="10" text-anchor="middle" fill="#000">ro/li</text><text x="214.5" y="314.7" font-size="10" text-anchor="middle" fill="#000">1,0</text><text x="214.5" y="324.7" font-size="10" text-anchor="middle" fill="#000">bl/gr</text><text x="254.5" y="314.7" font-size="10" text-anchor="middle" fill="#000">0,5</text><text x="254.5" y="324.7" font-size="10" text-anchor="middle" fill="#000">br/ge</text><text x="334.5" y="314.7" font-size="10" text-anchor="middle" fill="#000">0,5</text><text x="334.5" y="324.7" font-size="10" text-anchor="middle" fill="#000">br/ge</text><text x="415.5" y="314.7" font-size="10" text-anchor="middle" fill="#000">0,35</text><text x="415.5" y="324.7" font-size="10" text-anchor="middle" fill="#000">sw/gr</text><text x="536" y="314.7" font-size="10" text-anchor="middle" fill="#000">0,35</text><text x="536" y="324.7" font-size="10" text-anchor="middle" fill="#000">li/ws</text><text x="94" y="405" font-size="10" text-anchor="middle" fill="#000">0,5</text><text x="94" y="415" font-size="10" text-anchor="middle" fill="#000">ro/li</text><text x="495.5" y="405" font-size="10" text-anchor="middle" fill="#000">0,5</text><text x="495.5" y="415" font-size="10" text-anchor="middle" fill="#000">ro/li</text><text x="616" y="405" font-size="10" text-anchor="middle" fill="#000">0,5</text><text x="616" y="415" font-size="10" text-anchor="middle" fill="#000">ro/li</text><text x="254.5" y="545.6" font-size="10" text-anchor="middle" fill="#000">0,35</text><text x="254.5" y="555.6" font-size="10" text-anchor="middle" fill="#000">br/ge</text><text x="334.5" y="545.6" font-size="10" text-anchor="middle" fill="#000">0,35</text><text x="334.5" y="555.6" font-size="10" text-anchor="middle" fill="#000">br/ge</text><text x="94" y="595.6" font-size="10" text-anchor="middle" fill="#000">0,5</text><text x="94" y="605.6" font-size="10" text-anchor="middle" fill="#000">br</text><text x="134.5" y="595.6" font-size="10" text-anchor="middle" fill="#000">0,5</text><text x="134.5" y="605.6" font-size="10" text-anchor="middle" fill="#000">bl/gr</text><text x="455.5" y="595.6" font-size="10" text-anchor="middle" fill="#000">0,5</text><text x="455.5" y="605.6" font-size="10" text-anchor="middle" fill="#000">bl/gr</text><text x="495.5" y="595.6" font-size="10" text-anchor="middle" fill="#000">0,5</text><text x="495.5" y="605.6" font-size="10" text-anchor="middle" fill="#000">br</text><text x="576" y="595.6" font-size="10" text-anchor="middle" fill="#000">0,5</text><text x="576" y="605.6" font-size="10" text-anchor="middle" fill="#000">bl/gr</text><text x="616" y="595.6" font-size="10" text-anchor="middle" fill="#000">0,5</text><text x="616" y="605.6" font-size="10" text-anchor="middle" fill="#000">br</text><rect x="76.7" y="456.5" width="125.2" height="54.7" fill="#b3b3b3" stroke="#333" stroke-width="1"/><line x1="94" y1="447" x2="94" y2="465" stroke="#3c3c3c" stroke-width="1.1"/><path d="M90.8 451.8L94 448.2L97.2 451.8" stroke="#000" stroke-width="3" fill="none"/><path d="M90.8 451.8L94 448.2L97.2 451.8" stroke="#fff" stroke-width="1" fill="none"/><rect x="93.3" y="447.5" width="1.4" height="6" fill="#000"/><path d="M94 461H184.7V465" stroke="#222" stroke-width="1.1" fill="none"/><line x1="139.4" y1="461" x2="139.4" y2="465" stroke="#222" stroke-width="1.1"/><circle cx="94" cy="461" r="1.9" fill="#000"/><circle cx="139.4" cy="461" r="1.9" fill="#000"/><circle cx="94" cy="470.8" r="5.9" fill="none" stroke="#222" stroke-width="1.1"/><path d="M89.8287 466.62870000000004L98.1713 474.9713M98.1713 466.62870000000004L89.8287 474.9713" stroke="#222" stroke-width="1"/><circle cx="139.4" cy="470.8" r="5.9" fill="none" stroke="#222" stroke-width="1.1"/><path d="M135.2287 466.62870000000004L143.5713 474.9713M143.5713 466.62870000000004L135.2287 474.9713" stroke="#222" stroke-width="1"/><circle cx="184.7" cy="470.8" r="5.9" fill="none" stroke="#222" stroke-width="1.1"/><path d="M180.5287 466.62870000000004L188.8713 474.9713M188.8713 466.62870000000004L180.5287 474.9713" stroke="#222" stroke-width="1"/><line x1="94" y1="476.7" x2="94" y2="489" stroke="#222" stroke-width="1.1"/><line x1="184.7" y1="476.7" x2="184.7" y2="489" stroke="#222" stroke-width="1.1"/><line x1="139.4" y1="476.7" x2="139.4" y2="503" stroke="#222" stroke-width="1.1"/><path d="M103.7 504H113.5V483H165.2V504H175" stroke="#222" stroke-width="1.1" fill="none"/><circle cx="139.4" cy="483" r="1.9" fill="#000"/><path d="M94 489L104 504M184.7 489L175 504" stroke="#222" stroke-width="1.1"/><path d="M83 493.2H99.8M83 498H99.8M83 491V500" stroke="#222" stroke-width="1" fill="none"/><path d="M124.2 493.2H139.4M124.2 498H139.4M124.2 491V500" stroke="#222" stroke-width="1" fill="none"/><path d="M178.9 493.2H195.5M178.9 498H195.5M178.9 491V500" stroke="#222" stroke-width="1" fill="none"/><path d="M94 508H184.7M94 503V508M145.7 503V508M184.7 503V508" stroke="#222" stroke-width="1.1" fill="none"/><path d="M92 503h4M143.7 503h4M182.7 503h4M132.5 503h4" stroke="#222" stroke-width="1"/><circle cx="94" cy="508" r="1.9" fill="#000"/><circle cx="145.7" cy="508" r="1.9" fill="#000"/><line x1="94" y1="508" x2="94" y2="516" stroke="#3c3c3c" stroke-width="1.1"/><path d="M90.8 513.2L94 516.8L97.2 513.2" stroke="#000" stroke-width="3" fill="none"/><path d="M90.8 513.2L94 516.8L97.2 513.2" stroke="#fff" stroke-width="1" fill="none"/><rect x="93.3" y="511.5" width="1.4" height="6" fill="#000"/><line x1="134.5" y1="503" x2="134.5" y2="516" stroke="#3c3c3c" stroke-width="1.1"/><path d="M131.3 513.2L134.5 516.8L137.7 513.2" stroke="#000" stroke-width="3" fill="none"/><path d="M131.3 513.2L134.5 516.8L137.7 513.2" stroke="#fff" stroke-width="1" fill="none"/><rect x="133.8" y="511.5" width="1.4" height="6" fill="#000"/><text x="62" y="450.3" font-size="15" fill="#000">W</text><text x="77" y="450.3" font-size="9.5" fill="#000">19</text><text x="137" y="450.3" font-size="15" fill="#000">W</text><text x="151.5" y="450.3" font-size="9.5" fill="#000">1</text><text x="177.3" y="450.3" font-size="15" fill="#000">W</text><text x="192" y="450.3" font-size="9.5" fill="#000">13</text><text x="85" y="442" font-size="16" fill="#000">*</text><text x="197" y="441" font-size="16" fill="#000">*</text><text x="101" y="450.3" font-size="10" text-anchor="start" fill="#000">2</text><text x="101" y="522.5" font-size="10" text-anchor="start" fill="#000">3</text><text x="141.5" y="522.5" font-size="10" text-anchor="start" fill="#000">1</text><rect x="250.5" y="479" width="8.2" height="10.7" fill="#fff" stroke="#222" stroke-width="1"/><path d="M252.0 487V483.5a2.5 2.5 0 0 1 5 0V487M254.5 481.5V489" stroke="#222" stroke-width="0.9" fill="none"/><text x="262.5" y="489.7" font-size="14.5" fill="#000">T</text><text x="270.8" y="489.7" font-size="9.5" fill="#000">28/6</text><rect x="330.5" y="479" width="8.2" height="10.7" fill="#fff" stroke="#222" stroke-width="1"/><path d="M332.0 487V483.5a2.5 2.5 0 0 1 5 0V487M334.5 481.5V489" stroke="#222" stroke-width="0.9" fill="none"/><text x="342" y="489.7" font-size="14.5" fill="#000">T</text><text x="350.3" y="489.7" font-size="9.5" fill="#000">28a/6</text><rect x="234" y="609.4" width="30.7" height="30.1" fill="#b3b3b3" stroke="#333" stroke-width="1"/><line x1="254.5" y1="601" x2="254.5" y2="618" stroke="#222" stroke-width="1.1"/><path d="M251.3 603.5999999999999L254.5 600.0L257.7 603.5999999999999" stroke="#000" stroke-width="3" fill="none"/><path d="M251.3 603.5999999999999L254.5 600.0L257.7 603.5999999999999" stroke="#fff" stroke-width="1" fill="none"/><rect x="253.8" y="599.3" width="1.4" height="6" fill="#000"/><path d="M253.0 618h3" stroke="#222"/><path d="M254.5 618L249.5 630" stroke="#111" stroke-width="1.2"/><circle cx="238.9" cy="625.1" r="2.6" fill="none" stroke="#111" stroke-width="1.1"/><path d="M242.3 625L245.5 622v6z" fill="#111"/><path d="M244 623.6H251.3M244 626.2H250.3" stroke="#111" stroke-width="1"/><path d="M253.0 630.5h3" stroke="#222"/><line x1="254.5" y1="630.5" x2="254.5" y2="648" stroke="#222" stroke-width="1.1"/><path d="M251.3 645.4000000000001L254.5 649.0L257.7 645.4000000000001" stroke="#000" stroke-width="3" fill="none"/><path d="M251.3 645.4000000000001L254.5 649.0L257.7 645.4000000000001" stroke="#fff" stroke-width="1" fill="none"/><rect x="253.8" y="643.7" width="1.4" height="6" fill="#000"/><text x="262.0" y="603.6" font-size="10" text-anchor="start" fill="#000">2</text><text x="262.0" y="651" font-size="10" text-anchor="start" fill="#000">1</text><text x="227" y="655.2" font-size="15" fill="#000">F</text><text x="236.5" y="655.2" font-size="9.5" fill="#000">2</text><rect x="314.3" y="609.4" width="30.7" height="30.1" fill="#b3b3b3" stroke="#333" stroke-width="1"/><line x1="334.5" y1="601" x2="334.5" y2="618" stroke="#222" stroke-width="1.1"/><path d="M331.3 603.5999999999999L334.5 600.0L337.7 603.5999999999999" stroke="#000" stroke-width="3" fill="none"/><path d="M331.3 603.5999999999999L334.5 600.0L337.7 603.5999999999999" stroke="#fff" stroke-width="1" fill="none"/><rect x="333.8" y="599.3" width="1.4" height="6" fill="#000"/><path d="M333.0 618h3" stroke="#222"/><path d="M334.5 618L329.5 630" stroke="#111" stroke-width="1.2"/><circle cx="319.2" cy="625.1" r="2.6" fill="none" stroke="#111" stroke-width="1.1"/><path d="M322.6 625L325.8 622v6z" fill="#111"/><path d="M324.3 623.6H331.3M324.3 626.2H330.3" stroke="#111" stroke-width="1"/><path d="M333.0 630.5h3" stroke="#222"/><line x1="334.5" y1="630.5" x2="334.5" y2="648" stroke="#222" stroke-width="1.1"/><path d="M331.3 645.4000000000001L334.5 649.0L337.7 645.4000000000001" stroke="#000" stroke-width="3" fill="none"/><path d="M331.3 645.4000000000001L334.5 649.0L337.7 645.4000000000001" stroke="#fff" stroke-width="1" fill="none"/><rect x="333.8" y="643.7" width="1.4" height="6" fill="#000"/><text x="342.0" y="603.6" font-size="10" text-anchor="start" fill="#000">2</text><text x="342.0" y="651" font-size="10" text-anchor="start" fill="#000">1</text><text x="307.4" y="655.2" font-size="15" fill="#000">F</text><text x="316.9" y="655.2" font-size="9.5" fill="#000">3</text><rect x="395.2" y="609.4" width="30.7" height="30.1" fill="#b3b3b3" stroke="#333" stroke-width="1"/><line x1="415.5" y1="601" x2="415.5" y2="618" stroke="#222" stroke-width="1.1"/><path d="M412.3 603.5999999999999L415.5 600.0L418.7 603.5999999999999" stroke="#000" stroke-width="3" fill="none"/><path d="M412.3 603.5999999999999L415.5 600.0L418.7 603.5999999999999" stroke="#fff" stroke-width="1" fill="none"/><rect x="414.8" y="599.3" width="1.4" height="6" fill="#000"/><path d="M414.0 618h3" stroke="#222"/><path d="M415.5 618L410.5 630" stroke="#111" stroke-width="1.2"/><circle cx="400.09999999999997" cy="625.1" r="2.6" fill="none" stroke="#111" stroke-width="1.1"/><path d="M403.5 625L406.7 622v6z" fill="#111"/><path d="M405.2 623.6H412.3M405.2 626.2H411.3" stroke="#111" stroke-width="1"/><path d="M414.0 630.5h3" stroke="#222"/><line x1="415.5" y1="630.5" x2="415.5" y2="648" stroke="#222" stroke-width="1.1"/><path d="M412.3 645.4000000000001L415.5 649.0L418.7 645.4000000000001" stroke="#000" stroke-width="3" fill="none"/><path d="M412.3 645.4000000000001L415.5 649.0L418.7 645.4000000000001" stroke="#fff" stroke-width="1" fill="none"/><rect x="414.8" y="643.7" width="1.4" height="6" fill="#000"/><text x="423.0" y="603.6" font-size="10" text-anchor="start" fill="#000">1</text><text x="423.0" y="651" font-size="10" text-anchor="start" fill="#000">2</text><text x="383" y="655.2" font-size="15" fill="#000">F</text><text x="392.5" y="655.2" font-size="9.5" fill="#000">176</text><rect x="515.3" y="609.4" width="30.7" height="30.1" fill="#b3b3b3" stroke="#333" stroke-width="1"/><line x1="536" y1="601" x2="536" y2="618" stroke="#222" stroke-width="1.1"/><path d="M532.8 603.5999999999999L536 600.0L539.2 603.5999999999999" stroke="#000" stroke-width="3" fill="none"/><path d="M532.8 603.5999999999999L536 600.0L539.2 603.5999999999999" stroke="#fff" stroke-width="1" fill="none"/><rect x="535.3" y="599.3" width="1.4" height="6" fill="#000"/><path d="M534.5 618h3" stroke="#222"/><path d="M536 618L531 630" stroke="#111" stroke-width="1.2"/><circle cx="520.1999999999999" cy="625.1" r="2.6" fill="none" stroke="#111" stroke-width="1.1"/><path d="M523.5999999999999 625L526.8 622v6z" fill="#111"/><path d="M525.3 623.6H532.8M525.3 626.2H531.8" stroke="#111" stroke-width="1"/><path d="M534.5 630.5h3" stroke="#222"/><line x1="536" y1="630.5" x2="536" y2="648" stroke="#222" stroke-width="1.1"/><path d="M532.8 645.4000000000001L536 649.0L539.2 645.4000000000001" stroke="#000" stroke-width="3" fill="none"/><path d="M532.8 645.4000000000001L536 649.0L539.2 645.4000000000001" stroke="#fff" stroke-width="1" fill="none"/><rect x="535.3" y="643.7" width="1.4" height="6" fill="#000"/><text x="543.5" y="603.6" font-size="10" text-anchor="start" fill="#000">1</text><text x="543.5" y="651" font-size="10" text-anchor="start" fill="#000">2</text><text x="508" y="655.2" font-size="15" fill="#000">F</text><text x="517.5" y="655.2" font-size="9.5" fill="#000">7</text><rect x="440.2" y="462.3" width="70.5" height="43.2" fill="#b3b3b3" stroke="#333" stroke-width="1"/><line x1="495.5" y1="455" x2="495.5" y2="466.4" stroke="#222" stroke-width="1.1"/><path d="M492.3 456.8L495.5 453.2L498.7 456.8" stroke="#000" stroke-width="3" fill="none"/><path d="M492.3 456.8L495.5 453.2L498.7 456.8" stroke="#fff" stroke-width="1" fill="none"/><rect x="494.8" y="452.5" width="1.4" height="6" fill="#000"/><circle cx="495.5" cy="472.3" r="5.9" fill="none" stroke="#222" stroke-width="1.1"/><path d="M491.3287 468.12870000000004L499.6713 476.4713M499.6713 468.12870000000004L491.3287 476.4713" stroke="#222" stroke-width="1"/><line x1="495.5" y1="478.2" x2="495.5" y2="498" stroke="#222" stroke-width="1.1"/><path d="M494.0 486h3" stroke="#222"/><path d="M484.5 490H494.5M484.5 493.8H494.5M485.0 488.5V495.5" stroke="#222" stroke-width="1" fill="none"/><path d="M488.0 498h4M499.5 498h4M490.0 498V502.3H455.5V514M501.5 498V502.3H495.5V514" stroke="#222" stroke-width="1.1" fill="none"/><path d="M452.3 512.2L455.5 515.8L458.7 512.2" stroke="#000" stroke-width="3" fill="none"/><path d="M452.3 512.2L455.5 515.8L458.7 512.2" stroke="#fff" stroke-width="1" fill="none"/><rect x="454.8" y="510.5" width="1.4" height="6" fill="#000"/><path d="M492.3 512.2L495.5 515.8L498.7 512.2" stroke="#000" stroke-width="3" fill="none"/><path d="M492.3 512.2L495.5 515.8L498.7 512.2" stroke="#fff" stroke-width="1" fill="none"/><rect x="494.8" y="510.5" width="1.4" height="6" fill="#000"/><text x="458.4" y="450.2" font-size="15" fill="#000">W</text><text x="473.4" y="450.2" font-size="9.5" fill="#000">47</text><text x="502.5" y="456.7" font-size="10" text-anchor="start" fill="#000">3</text><text x="462.5" y="516.6" font-size="10" text-anchor="start" fill="#000">2</text><text x="502.5" y="516.6" font-size="10" text-anchor="start" fill="#000">1</text><rect x="560.7" y="462.3" width="70.5" height="43.2" fill="#b3b3b3" stroke="#333" stroke-width="1"/><line x1="616" y1="455" x2="616" y2="466.4" stroke="#222" stroke-width="1.1"/><path d="M612.8 456.8L616 453.2L619.2 456.8" stroke="#000" stroke-width="3" fill="none"/><path d="M612.8 456.8L616 453.2L619.2 456.8" stroke="#fff" stroke-width="1" fill="none"/><rect x="615.3" y="452.5" width="1.4" height="6" fill="#000"/><circle cx="616" cy="472.3" r="5.9" fill="none" stroke="#222" stroke-width="1.1"/><path d="M611.8287 468.12870000000004L620.1713 476.4713M620.1713 468.12870000000004L611.8287 476.4713" stroke="#222" stroke-width="1"/><line x1="616" y1="478.2" x2="616" y2="498" stroke="#222" stroke-width="1.1"/><path d="M614.5 486h3" stroke="#222"/><path d="M605 490H615M605 493.8H615M605.5 488.5V495.5" stroke="#222" stroke-width="1" fill="none"/><path d="M608.5 498h4M620 498h4M610.5 498V502.3H576V514M622 498V502.3H616V514" stroke="#222" stroke-width="1.1" fill="none"/><path d="M572.8 512.2L576 515.8L579.2 512.2" stroke="#000" stroke-width="3" fill="none"/><path d="M572.8 512.2L576 515.8L579.2 512.2" stroke="#fff" stroke-width="1" fill="none"/><rect x="575.3" y="510.5" width="1.4" height="6" fill="#000"/><path d="M612.8 512.2L616 515.8L619.2 512.2" stroke="#000" stroke-width="3" fill="none"/><path d="M612.8 512.2L616 515.8L619.2 512.2" stroke="#fff" stroke-width="1" fill="none"/><rect x="615.3" y="510.5" width="1.4" height="6" fill="#000"/><text x="579" y="450.2" font-size="15" fill="#000">W</text><text x="594" y="450.2" font-size="9.5" fill="#000">48</text><text x="623" y="456.7" font-size="10" text-anchor="start" fill="#000">3</text><text x="583" y="516.6" font-size="10" text-anchor="start" fill="#000">2</text><text x="623" y="516.6" font-size="10" text-anchor="start" fill="#000">1</text><path d="M102.2 690A12.8 12.8 0 0 1 126.3 690" stroke="#111" stroke-width="1" fill="none"/><path d="M722 411L729.5 403.5L737 411" stroke="#333" stroke-width="5.2" fill="none" stroke-linejoin="miter"/><path d="M722 411L729.5 403.5L737 411" stroke="#b8b8b8" stroke-width="3" fill="none" stroke-linejoin="miter"/><path d="M707.5 428L700 435.5L707.5 443" stroke="#333" stroke-width="5.2" fill="none" stroke-linejoin="miter"/><path d="M707.5 428L700 435.5L707.5 443" stroke="#b8b8b8" stroke-width="3" fill="none" stroke-linejoin="miter"/><path d="M751 428L758.5 435.5L751 443" stroke="#333" stroke-width="5.2" fill="none" stroke-linejoin="miter"/><path d="M751 428L758.5 435.5L751 443" stroke="#b8b8b8" stroke-width="3" fill="none" stroke-linejoin="miter"/><path d="M722 460L729.5 467.5L737 460" stroke="#333" stroke-width="5.2" fill="none" stroke-linejoin="miter"/><path d="M722 460L729.5 467.5L737 460" stroke="#b8b8b8" stroke-width="3" fill="none" stroke-linejoin="miter"/><circle cx="726.3" cy="511.1" r="6.2" fill="#c8c8c8" stroke="#333" stroke-width="1.1" stroke-dasharray="1.3 .6"/><path d="M731.5 516.3000000000001L737.8 522.4" stroke="#6a4a2a" stroke-width="3.2"/><path d="M732 516.8000000000001L737.2 521.9" stroke="#e8b060" stroke-width="1.4"/><circle cx="737.5" cy="522.1" r="1" fill="#c00"/><circle cx="726.3" cy="540.4" r="6.2" fill="#c8c8c8" stroke="#333" stroke-width="1.1" stroke-dasharray="1.3 .6"/><path d="M731.5 545.6L737.8 551.6999999999999" stroke="#6a4a2a" stroke-width="3.2"/><path d="M732 546.1L737.2 551.1999999999999" stroke="#e8b060" stroke-width="1.4"/><circle cx="737.5" cy="551.4" r="1" fill="#c00"/><path d="M722.3 540.4h8M726.3 536.4v8" stroke="#111" stroke-width="1.3"/><circle cx="726.3" cy="570.3" r="6.2" fill="#c8c8c8" stroke="#333" stroke-width="1.1" stroke-dasharray="1.3 .6"/><path d="M731.5 575.5L737.8 581.5999999999999" stroke="#6a4a2a" stroke-width="3.2"/><path d="M732 576.0L737.2 581.0999999999999" stroke="#e8b060" stroke-width="1.4"/><circle cx="737.5" cy="581.3" r="1" fill="#c00"/><path d="M722.3 570.3h8" stroke="#111" stroke-width="1.3"/></g></svg>
<div style="position:absolute;left:825.5px;top:112.15px;font-size:14px;line-height:1;font-weight:700;color:#000;white-space:pre;transform:scaleX(0.952);transform-origin:0 0;">Передний плафон освещения салона, фонарь для чтения со стороны</div>
<div style="position:absolute;left:825.5px;top:127.15px;font-size:14px;line-height:1;font-weight:700;color:#000;white-space:pre;transform:scaleX(0.952);transform-origin:0 0;">водителя, фонарь для чтения со стороны переднего пассажира, задние</div>
<div style="position:absolute;left:825.5px;top:143.15px;font-size:14px;line-height:1;font-weight:700;color:#000;white-space:pre;transform:scaleX(0.952);transform-origin:0 0;">плафоны освещения салона, концевые выключатели дверей</div>
<div style="position:absolute;left:826px;top:159px;width:15px;height:15px;background:#0078d7"></div>
<div style="position:absolute;left:874px;top:159px;width:12px;height:15px;background:#0078d7"></div>
<div style="position:absolute;left:826px;top:176.5px;width:15px;height:15px;background:#0078d7"></div>
<div style="position:absolute;left:874px;top:176.5px;width:12px;height:15px;background:#0078d7"></div>
<div style="position:absolute;left:826px;top:194px;width:15px;height:15px;background:#0078d7"></div>
<div style="position:absolute;left:874px;top:194px;width:5px;height:15px;background:#0078d7"></div>
<div style="position:absolute;left:874px;top:209px;width:8px;height:15px;background:#0078d7"></div>
<div style="position:absolute;left:887.6px;top:159px;width:248.8px;height:15px;background:#0078d7"></div>
<div style="position:absolute;left:887.6px;top:176.5px;width:325.4px;height:15px;background:#0078d7"></div>
<div style="position:absolute;left:887.6px;top:194px;width:410.8px;height:15px;background:#0078d7"></div>
<div style="position:absolute;left:887.6px;top:209px;width:37.6px;height:15px;background:#0078d7"></div>
<div style="position:absolute;left:826px;top:159.15px;font-size:14px;line-height:1;font-weight:400;color:#fff;white-space:pre;transform:scaleX(0.952);transform-origin:0 0;">F2</div>
<div style="position:absolute;left:874.8px;top:159.15px;font-size:14px;line-height:1;font-weight:400;color:#fff;white-space:pre;transform:scaleX(0.952);transform-origin:0 0;">-</div>
<div style="position:absolute;left:888px;top:159.15px;font-size:14px;line-height:1;font-weight:400;color:#fff;white-space:pre;transform:scaleX(0.952);transform-origin:0 0;">Концевой выключатель двери водителя</div>
<div style="position:absolute;left:826px;top:176.15px;font-size:14px;line-height:1;font-weight:400;color:#fff;white-space:pre;transform:scaleX(0.952);transform-origin:0 0;">F3</div>
<div style="position:absolute;left:874.8px;top:176.15px;font-size:14px;line-height:1;font-weight:400;color:#fff;white-space:pre;transform:scaleX(0.952);transform-origin:0 0;">-</div>
<div style="position:absolute;left:888px;top:176.15px;font-size:14px;line-height:1;font-weight:400;color:#fff;white-space:pre;transform:scaleX(0.952);transform-origin:0 0;">Концевой выключатель двери переднего пассажира</div>
<div style="position:absolute;left:826px;top:194.15px;font-size:14px;line-height:1;font-weight:400;color:#fff;white-space:pre;transform:scaleX(0.952);transform-origin:0 0;">F7</div>
<div style="position:absolute;left:874.8px;top:194.15px;font-size:14px;line-height:1;font-weight:400;color:#fff;white-space:pre;transform:scaleX(0.952);transform-origin:0 0;">-</div>
<div style="position:absolute;left:888px;top:194.15px;font-size:14px;line-height:1;font-weight:400;color:#fff;white-space:pre;transform:scaleX(0.952);transform-origin:0 0;">Концевой выключатель задней правой сдвижной двери и боковой</div>
<div style="position:absolute;left:888px;top:209.15px;font-size:14px;line-height:1;font-weight:400;color:#fff;white-space:pre;transform:scaleX(0.952);transform-origin:0 0;">двери</div>
<div style="position:absolute;left:826px;top:226.15px;font-size:14px;line-height:1;font-weight:400;color:#000;white-space:pre;transform:scaleX(0.952);transform-origin:0 0;">F176</div>
<div style="position:absolute;left:874.8px;top:226.15px;font-size:14px;line-height:1;font-weight:400;color:#000;white-space:pre;transform:scaleX(0.952);transform-origin:0 0;">-</div>
<div style="position:absolute;left:888px;top:226.15px;font-size:14px;line-height:1;font-weight:400;color:#000;white-space:pre;transform:scaleX(0.952);transform-origin:0 0;">Концевой выключатель задней левой сдвижной двери и боковой двери</div>
<div style="position:absolute;left:826px;top:244.15px;font-size:14px;line-height:1;font-weight:400;color:#000;white-space:pre;transform:scaleX(0.952);transform-origin:0 0;">J519</div>
<div style="position:absolute;left:874.8px;top:244.15px;font-size:14px;line-height:1;font-weight:400;color:#000;white-space:pre;transform:scaleX(0.952);transform-origin:0 0;">-</div>
<div style="position:absolute;left:888px;top:244.15px;font-size:14px;line-height:1;font-weight:400;color:#000;white-space:pre;transform:scaleX(0.952);transform-origin:0 0;">Блок управления бортовой сети</div>
<div style="position:absolute;left:826px;top:261.15px;font-size:14px;line-height:1;font-weight:400;color:#000;white-space:pre;transform:scaleX(0.952);transform-origin:0 0;">T28</div>
<div style="position:absolute;left:874.8px;top:261.15px;font-size:14px;line-height:1;font-weight:400;color:#000;white-space:pre;transform:scaleX(0.952);transform-origin:0 0;">-</div>
<div style="position:absolute;left:888px;top:261.15px;font-size:14px;line-height:1;font-weight:400;color:#000;white-space:pre;transform:scaleX(0.952);transform-origin:0 0;">Разъём, 28-контактный, место соединения - левая стойка А</div>
<div style="position:absolute;left:826px;top:278.15px;font-size:14px;line-height:1;font-weight:400;color:#000;white-space:pre;transform:scaleX(0.952);transform-origin:0 0;">T28a</div>
<div style="position:absolute;left:874.8px;top:278.15px;font-size:14px;line-height:1;font-weight:400;color:#000;white-space:pre;transform:scaleX(0.952);transform-origin:0 0;">-</div>
<div style="position:absolute;left:888px;top:278.15px;font-size:14px;line-height:1;font-weight:400;color:#000;white-space:pre;transform:scaleX(0.952);transform-origin:0 0;">Разъём, 28-контактный, место соединения - правая стойка А</div>
<div style="position:absolute;left:826px;top:296.15px;font-size:14px;line-height:1;font-weight:400;color:#000;white-space:pre;transform:scaleX(0.952);transform-origin:0 0;">W1</div>
<div style="position:absolute;left:874.8px;top:296.15px;font-size:14px;line-height:1;font-weight:400;color:#000;white-space:pre;transform:scaleX(0.952);transform-origin:0 0;">-</div>
<div style="position:absolute;left:888px;top:296.15px;font-size:14px;line-height:1;font-weight:400;color:#000;white-space:pre;transform:scaleX(0.952);transform-origin:0 0;">Плафон освещения салона, передний</div>
<div style="position:absolute;left:826px;top:313.15px;font-size:14px;line-height:1;font-weight:400;color:#000;white-space:pre;transform:scaleX(0.952);transform-origin:0 0;">W13</div>
<div style="position:absolute;left:874.8px;top:313.15px;font-size:14px;line-height:1;font-weight:400;color:#000;white-space:pre;transform:scaleX(0.952);transform-origin:0 0;">-</div>
<div style="position:absolute;left:888px;top:313.15px;font-size:14px;line-height:1;font-weight:400;color:#000;white-space:pre;transform:scaleX(0.952);transform-origin:0 0;">Фонарь для чтения со стороны переднего пассажира</div>
<div style="position:absolute;left:826px;top:330.15px;font-size:14px;line-height:1;font-weight:400;color:#000;white-space:pre;transform:scaleX(0.952);transform-origin:0 0;">W19</div>
<div style="position:absolute;left:874.8px;top:330.15px;font-size:14px;line-height:1;font-weight:400;color:#000;white-space:pre;transform:scaleX(0.952);transform-origin:0 0;">-</div>
<div style="position:absolute;left:888px;top:330.15px;font-size:14px;line-height:1;font-weight:400;color:#000;white-space:pre;transform:scaleX(0.952);transform-origin:0 0;">Фонарь для чтения со стороны водителя</div>
<div style="position:absolute;left:826px;top:348.15px;font-size:14px;line-height:1;font-weight:400;color:#000;white-space:pre;transform:scaleX(0.952);transform-origin:0 0;">W47</div>
<div style="position:absolute;left:874.8px;top:348.15px;font-size:14px;line-height:1;font-weight:400;color:#000;white-space:pre;transform:scaleX(0.952);transform-origin:0 0;">-</div>
<div style="position:absolute;left:888px;top:348.15px;font-size:14px;line-height:1;font-weight:400;color:#000;white-space:pre;transform:scaleX(0.952);transform-origin:0 0;">Левый плафон освещения задней части салона</div>
<div style="position:absolute;left:826px;top:365.15px;font-size:14px;line-height:1;font-weight:400;color:#000;white-space:pre;transform:scaleX(0.952);transform-origin:0 0;">W48</div>
<div style="position:absolute;left:874.8px;top:365.15px;font-size:14px;line-height:1;font-weight:400;color:#000;white-space:pre;transform:scaleX(0.952);transform-origin:0 0;">-</div>
<div style="position:absolute;left:888px;top:365.15px;font-size:14px;line-height:1;font-weight:400;color:#000;white-space:pre;transform:scaleX(0.952);transform-origin:0 0;">Правый плафон освещения задней части салона</div>
<div style="position:absolute;left:874.8px;top:382.15px;font-size:14px;line-height:1;font-weight:400;color:#000;white-space:pre;transform:scaleX(0.952);transform-origin:0 0;">-</div>
<div style="position:absolute;left:888px;top:382.15px;font-size:14px;line-height:1;font-weight:400;color:#000;white-space:pre;transform:scaleX(0.952);transform-origin:0 0;">Точка соединения с массой на левой стойке В снизу</div>
<div style="position:absolute;left:874.8px;top:405.15px;font-size:14px;line-height:1;font-weight:400;color:#000;white-space:pre;transform:scaleX(0.952);transform-origin:0 0;">-</div>
<div style="position:absolute;left:888px;top:405.15px;font-size:14px;line-height:1;font-weight:400;color:#000;white-space:pre;transform:scaleX(0.952);transform-origin:0 0;">Точка соединения с массой на правой стойке В снизу</div>
<div style="position:absolute;left:874.8px;top:427.15px;font-size:14px;line-height:1;font-weight:400;color:#000;white-space:pre;transform:scaleX(0.952);transform-origin:0 0;">-</div>
<div style="position:absolute;left:888px;top:427.15px;font-size:14px;line-height:1;font-weight:400;color:#000;white-space:pre;transform:scaleX(0.952);transform-origin:0 0;">Соединение с массой 1 в жгуте проводов салона</div>
<div style="position:absolute;left:874.8px;top:450.15px;font-size:14px;line-height:1;font-weight:400;color:#000;white-space:pre;transform:scaleX(0.952);transform-origin:0 0;">-</div>
<div style="position:absolute;left:888px;top:450.15px;font-size:14px;line-height:1;font-weight:400;color:#000;white-space:pre;transform:scaleX(0.952);transform-origin:0 0;">Соединение с массой 2 в жгуте проводов салона</div>
<div style="position:absolute;left:874.8px;top:473.15px;font-size:14px;line-height:1;font-weight:400;color:#000;white-space:pre;transform:scaleX(0.952);transform-origin:0 0;">-</div>
<div style="position:absolute;left:888px;top:473.15px;font-size:14px;line-height:1;font-weight:400;color:#000;white-space:pre;transform:scaleX(0.952);transform-origin:0 0;">Соединение с массой 3 в жгуте проводов салона</div>
<div style="position:absolute;left:874.8px;top:495.15px;font-size:14px;line-height:1;font-weight:400;color:#000;white-space:pre;transform:scaleX(0.952);transform-origin:0 0;">-</div>
<div style="position:absolute;left:888px;top:495.15px;font-size:14px;line-height:1;font-weight:400;color:#000;white-space:pre;transform:scaleX(0.952);transform-origin:0 0;">Точка соединения с массой в пространстве для ног в передней левой</div>
<div style="position:absolute;left:888px;top:510.15px;font-size:14px;line-height:1;font-weight:400;color:#000;white-space:pre;transform:scaleX(0.952);transform-origin:0 0;">части салона</div>
<div style="position:absolute;left:874.8px;top:528.15px;font-size:14px;line-height:1;font-weight:400;color:#000;white-space:pre;transform:scaleX(0.952);transform-origin:0 0;">-</div>
<div style="position:absolute;left:888px;top:528.15px;font-size:14px;line-height:1;font-weight:400;color:#000;white-space:pre;transform:scaleX(0.952);transform-origin:0 0;">Соединение 1 (концевой выключатель двери) в жгуте проводов салона</div>
<div style="position:absolute;left:825.8px;top:551.27px;font-size:11.5px;line-height:1;font-weight:400;color:#000;white-space:pre;">*</div>
<div style="position:absolute;left:874.8px;top:550.15px;font-size:14px;line-height:1;font-weight:400;color:#000;white-space:pre;transform:scaleX(0.952);transform-origin:0 0;">-</div>
<div style="position:absolute;left:888px;top:550.15px;font-size:14px;line-height:1;font-weight:400;color:#000;white-space:pre;transform:scaleX(0.952);transform-origin:0 0;">Только в а/м с передним плафоном освещения салона с фонарями для</div>
<div style="position:absolute;left:888px;top:565.15px;font-size:14px;line-height:1;font-weight:400;color:#000;white-space:pre;transform:scaleX(0.952);transform-origin:0 0;">чтения</div>
<div style="position:absolute;left:826px;top:583.15px;font-size:14px;line-height:1;font-weight:400;color:#000;white-space:pre;transform:scaleX(0.952);transform-origin:0 0;">---</div>
<div style="position:absolute;left:874.8px;top:583.15px;font-size:14px;line-height:1;font-weight:400;color:#000;white-space:pre;transform:scaleX(0.952);transform-origin:0 0;">-</div>
<div style="position:absolute;left:888px;top:583.15px;font-size:14px;line-height:1;font-weight:400;color:#000;white-space:pre;transform:scaleX(0.952);transform-origin:0 0;">Только для а/м с левой задней сдвижной дверью</div>
<div style="position:absolute;left:826px;top:600.15px;font-size:14px;line-height:1;font-weight:400;color:#000;white-space:pre;">-</div>
<svg style="position:absolute;left:830px;top:606px" width="15" height="6"><circle cx="3.3" cy="2.6" r="2.5" fill="#000"/><circle cx="11" cy="2.6" r="2.5" fill="#000"/></svg>
<div style="position:absolute;left:845.5px;top:600.15px;font-size:14px;line-height:1;font-weight:400;color:#000;white-space:pre;">-</div>
<div style="position:absolute;left:874.8px;top:600.15px;font-size:14px;line-height:1;font-weight:400;color:#000;white-space:pre;transform:scaleX(0.952);transform-origin:0 0;">-</div>
<div style="position:absolute;left:888px;top:600.15px;font-size:14px;line-height:1;font-weight:400;color:#000;white-space:pre;transform:scaleX(0.952);transform-origin:0 0;">Только для а/м с правой задней сдвижной дверью</div>
<svg style="position:absolute;left:823px;top:380.25px" width="36" height="23.350000000000023" viewBox="0 0 36 23.350000000000023"><circle cx="17.5" cy="16.3" r="15.2" fill="none" stroke="#000" stroke-width="1.6"/></svg>
<div style="position:absolute;left:835px;top:390.69px;font-size:11px;line-height:1;font-weight:400;color:#000;white-space:pre;">77</div>
<svg style="position:absolute;left:823px;top:403.5px" width="36" height="22.5" viewBox="0 0 36 22.5"><circle cx="17.5" cy="16.3" r="15.2" fill="none" stroke="#000" stroke-width="1.6"/></svg>
<div style="position:absolute;left:835px;top:413.49px;font-size:11px;line-height:1;font-weight:400;color:#000;white-space:pre;">78</div>
<svg style="position:absolute;left:823px;top:425.6px" width="36" height="22.799999999999955" viewBox="0 0 36 22.799999999999955"><circle cx="17.5" cy="16.3" r="15.2" fill="none" stroke="#000" stroke-width="1.6"/></svg>
<div style="position:absolute;left:832px;top:436.19px;font-size:11px;line-height:1;font-weight:400;color:#000;white-space:pre;">238</div>
<svg style="position:absolute;left:823px;top:448.5px" width="36" height="22.69999999999999" viewBox="0 0 36 22.69999999999999"><circle cx="17.5" cy="16.3" r="15.2" fill="none" stroke="#000" stroke-width="1.6"/></svg>
<div style="position:absolute;left:832px;top:458.89px;font-size:11px;line-height:1;font-weight:400;color:#000;white-space:pre;">249</div>
<svg style="position:absolute;left:823px;top:471.3px" width="36" height="22.69999999999999" viewBox="0 0 36 22.69999999999999"><circle cx="17.5" cy="16.3" r="15.2" fill="none" stroke="#000" stroke-width="1.6"/></svg>
<div style="position:absolute;left:832px;top:481.69px;font-size:11px;line-height:1;font-weight:400;color:#000;white-space:pre;">277</div>
<svg style="position:absolute;left:823px;top:493px" width="36" height="33" viewBox="0 0 36 33"><circle cx="17.5" cy="16.5" r="15.2" fill="none" stroke="#000" stroke-width="1.6"/></svg>
<div style="position:absolute;left:835px;top:503.49px;font-size:11px;line-height:1;font-weight:400;color:#000;white-space:pre;">602</div>
<svg style="position:absolute;left:823px;top:526.6px" width="36" height="21.799999999999955" viewBox="0 0 36 21.799999999999955"><circle cx="17.5" cy="16.3" r="15.2" fill="none" stroke="#000" stroke-width="1.6"/></svg>
<div style="position:absolute;left:835px;top:536.59px;font-size:11px;line-height:1;font-weight:400;color:#000;white-space:pre;">B154</div>
<div style="position:absolute;left:2px;top:690px;width:1362px;height:17px;background:#c8c8c8"></div>
<div style="position:absolute;left:2px;top:690px;width:34px;height:1px;background:#808080"></div>
<div style="position:absolute;left:36px;top:690px;width:1330px;height:1px;background:#000"></div>
<div style="position:absolute;left:2px;top:691px;width:17px;height:15px;box-sizing:border-box;background:#f0f0f0;border-top:1px solid #fff;border-left:1px solid #fff;border-right:2px solid #a0a0a0;border-bottom:2px solid #a0a0a0"></div>
<div style="position:absolute;left:19px;top:691px;width:17px;height:15px;box-sizing:border-box;background:#f0f0f0;border-top:1px solid #fff;border-left:1px solid #fff;border-right:2px solid #a0a0a0;border-bottom:2px solid #a0a0a0"></div>
<svg style="position:absolute;left:2px;top:691px;" width="17" height="15" viewBox="0 0 17 15"><path d="M5 7.5l4.5-4.5v9z" fill="#6d6d6d"/></svg>
<svg style="position:absolute;left:19px;top:691px;" width="17" height="15" viewBox="0 0 17 15"><path d="M11 7.5L6.5 3v9z" fill="#6d6d6d"/></svg>
<svg style="position:absolute;left:0;top:689" width="200" height="19" viewBox="0 0 200 19"><path d="M36 1.5L43 17H85L92 1.5z" fill="#f0f0f0"/><path d="M36 1.5L43 17M85 17L88 10" stroke="#000" stroke-width="1.2" fill="none"/><path d="M87 1.5L93.5 17H182.5L189 1.5z" fill="#fff"/><path d="M87 1.5L93.5 17M182.5 17L189 1.5" stroke="#000" stroke-width="1.2" fill="none"/><path d="M36 1.5H200" stroke="#000" stroke-width="1"/></svg>
<div style="position:absolute;left:200px;top:690px;width:1164px;height:1px;background:#000"></div>
<div style="position:absolute;left:48px;top:692.84px;font-size:12px;line-height:1;font-weight:400;color:#000;white-space:pre;transform:scaleX(0.98);transform-origin:0 0;">Обзор</div>
<div style="position:absolute;left:96px;top:692.84px;font-size:12px;line-height:1;font-weight:700;color:#000;white-space:pre;transform:scaleX(0.975);transform-origin:0 0;">Электросхема</div>
<div style="position:absolute;left:0px;top:707px;width:1366px;height:2px;background:#fff"></div>
<div style="position:absolute;left:0px;top:709px;width:1366px;height:19px;background:#d4d0c8"></div>
<div style="position:absolute;left:3px;top:713.84px;font-size:12px;line-height:1;font-weight:400;color:#000;white-space:pre;transform:scaleX(0.98);transform-origin:0 0;">Готово</div>
<div style="position:absolute;left:663px;top:711px;width:68px;height:16px;box-sizing:border-box;border-top:1px solid #a0a0a0;border-left:1px solid #a0a0a0;border-right:1px solid #fff;border-bottom:1px solid #fff"></div>
<div style="position:absolute;left:665px;top:713.84px;font-size:12px;line-height:1;font-weight:400;color:#000;white-space:pre;transform:scaleX(0.9);transform-origin:0 0;">9000000126</div>
<div style="position:absolute;left:733px;top:711px;width:145px;height:16px;box-sizing:border-box;border-top:1px solid #a0a0a0;border-left:1px solid #a0a0a0;border-right:1px solid #fff;border-bottom:1px solid #fff"></div>
<div style="position:absolute;left:880px;top:711px;width:15px;height:16px;box-sizing:border-box;border-top:1px solid #a0a0a0;border-left:1px solid #a0a0a0;border-right:1px solid #fff;border-bottom:1px solid #fff"></div>
<div style="position:absolute;left:882px;top:713.84px;font-size:12px;line-height:1;font-weight:400;color:#000;white-space:pre;transform:scaleX(0.98);transform-origin:0 0;">4</div>
<div style="position:absolute;left:896px;top:711px;width:30px;height:16px;box-sizing:border-box;border-top:1px solid #a0a0a0;border-left:1px solid #a0a0a0;border-right:1px solid #fff;border-bottom:1px solid #fff"></div>
<div style="position:absolute;left:898px;top:713.84px;font-size:12px;line-height:1;font-weight:400;color:#000;white-space:pre;transform:scaleX(0.94);transform-origin:0 0;">2KA</div>
<div style="position:absolute;left:928px;top:711px;width:44px;height:16px;box-sizing:border-box;border-top:1px solid #a0a0a0;border-left:1px solid #a0a0a0;border-right:1px solid #fff;border-bottom:1px solid #fff"></div>
<div style="position:absolute;left:930px;top:713.84px;font-size:12px;line-height:1;font-weight:400;color:#000;white-space:pre;transform:scaleX(0.98);transform-origin:0 0;">Caddy</div>
<div style="position:absolute;left:974px;top:711px;width:27px;height:16px;box-sizing:border-box;border-top:1px solid #a0a0a0;border-left:1px solid #a0a0a0;border-right:1px solid #fff;border-bottom:1px solid #fff"></div>
<div style="position:absolute;left:976px;top:713.84px;font-size:12px;line-height:1;font-weight:400;color:#000;white-space:pre;transform:scaleX(0.86);transform-origin:0 0;">BDJ</div>
<div style="position:absolute;left:1003px;top:711px;width:37px;height:16px;box-sizing:border-box;border-top:1px solid #a0a0a0;border-left:1px solid #a0a0a0;border-right:1px solid #fff;border-bottom:1px solid #fff"></div>
<div style="position:absolute;left:1042px;top:711px;width:36px;height:16px;box-sizing:border-box;border-top:1px solid #a0a0a0;border-left:1px solid #a0a0a0;border-right:1px solid #fff;border-bottom:1px solid #fff"></div>
<div style="position:absolute;left:1080px;top:711px;width:85px;height:16px;box-sizing:border-box;border-top:1px solid #a0a0a0;border-left:1px solid #a0a0a0;border-right:1px solid #fff;border-bottom:1px solid #fff"></div>
<div style="position:absolute;left:1167px;top:711px;width:58px;height:16px;box-sizing:border-box;border-top:1px solid #a0a0a0;border-left:1px solid #a0a0a0;border-right:1px solid #fff;border-bottom:1px solid #fff"></div>
<div style="position:absolute;left:1227px;top:711px;width:88px;height:16px;box-sizing:border-box;border-top:1px solid #a0a0a0;border-left:1px solid #a0a0a0;border-right:1px solid #fff;border-bottom:1px solid #fff"></div>
<div style="position:absolute;left:1317px;top:711px;width:16px;height:16px;box-sizing:border-box;border-top:1px solid #a0a0a0;border-left:1px solid #a0a0a0;border-right:1px solid #fff;border-bottom:1px solid #fff"></div>
<div style="position:absolute;left:1319px;top:713.84px;font-size:12px;line-height:1;font-weight:400;color:#000;white-space:pre;transform:scaleX(0.9);transform-origin:0 0;">1</div>
<div style="position:absolute;left:1335px;top:711px;width:31px;height:16px;box-sizing:border-box;border-top:1px solid #a0a0a0;border-left:1px solid #a0a0a0;border-right:1px solid #fff;border-bottom:1px solid #fff"></div>
<div style="position:absolute;left:0px;top:728px;width:1366px;height:40px;background:#0c0f18"></div>
<div style="position:absolute;left:393px;top:728px;width:48px;height:40px;background:#393b40"></div>
<div style="position:absolute;left:348px;top:766px;width:40px;height:2px;background:#76b9ed"></div>
<div style="position:absolute;left:393px;top:766px;width:48px;height:2px;background:#76b9ed"></div>
<svg style="position:absolute;left:16px;top:740px;" width="17" height="17" viewBox="0 0 17 17"><path d="M0 2.2L6.6 1.3V7.6H0zM7.5 1.2L16.3 0V7.6H7.5zM0 8.5h6.6v6.3L0 13.9zM7.5 8.5h8.8v7.8L7.5 15z" fill="#fff"/></svg>
<svg style="position:absolute;left:62px;top:739px;" width="19" height="19" viewBox="0 0 19 19"><circle cx="11.5" cy="7" r="5.3" fill="none" stroke="#fff" stroke-width="1.3"/><path d="M7.8 10.8L1.5 17.5" stroke="#fff" stroke-width="1.5"/></svg>
<svg style="position:absolute;left:111px;top:740px;" width="24" height="18" viewBox="0 0 24 18"><rect x="1" y="0" width="4" height="4" fill="#1e90ff"/><rect x="5.5" y="0" width="4" height="4" fill="#1e90ff"/><rect x="1" y="4.5" width="4" height="4" fill="#1e90ff"/><rect x="5.5" y="4.5" width="4" height="4" fill="#1e90ff"/><path d="M1 12l5-4h11l5 3v3l-5 3H6l-5-2z" fill="#d8d8d8"/><path d="M1 12v3l5 2h11l5-3v-3l-5 3H6z" fill="#909090"/><rect x="7" y="13.5" width="1.5" height="1.3" fill="#2c2"/></svg>
<svg style="position:absolute;left:160px;top:740px;" width="24" height="18" viewBox="0 0 24 18"><path d="M1 12l5-4h11l5 3v3l-5 3H6l-5-2z" fill="#d8d8d8"/><path d="M1 12v3l5 2h11l5-3v-3l-5 3H6z" fill="#909090"/><rect x="7" y="13.5" width="1.5" height="1.3" fill="#2c2"/></svg>
<svg style="position:absolute;left:209px;top:738px;" width="24" height="20" viewBox="0 0 24 20"><path d="M1 2h8l2 2h12v15H1z" fill="#f8d775"/><path d="M1 6h22v13H1z" fill="#fce4a6"/><path d="M6 18v-6h12v6h-3v-3h-6v3z" fill="#2a8ee8"/></svg>
<svg style="position:absolute;left:258px;top:737px;" width="24" height="22" viewBox="0 0 24 22"><ellipse cx="12" cy="11" rx="4" ry="9.5" fill="none" stroke="#e0a020" stroke-width="1.6"/><ellipse cx="12" cy="11" rx="9.5" ry="4" fill="none" stroke="#d03030" stroke-width="1.6"/><ellipse cx="12" cy="11" rx="9" ry="5" transform="rotate(45 12 11)" fill="none" stroke="#2a9a50" stroke-width="1.6"/><ellipse cx="12" cy="11" rx="9" ry="5" transform="rotate(-45 12 11)" fill="none" stroke="#3070d0" stroke-width="1.6"/><ellipse cx="12" cy="11" rx="7" ry="8" fill="none" stroke="#e0c040" stroke-width="1.2"/></svg>
<svg style="position:absolute;left:307px;top:736px;" width="24" height="24" viewBox="0 0 24 24"><ellipse cx="12" cy="12" rx="10.5" ry="11.5" fill="#e0201a"/><ellipse cx="12" cy="12" rx="5" ry="8.3" fill="#0c0f18"/></svg>
<svg style="position:absolute;left:356px;top:736px;" width="24" height="24" viewBox="0 0 24 24"><circle cx="12" cy="12" r="11" fill="#db4437"/><path d="M12 12L2.5 6.5A11 11 0 0 0 12 23z" fill="#0f9d58"/><path d="M12 12V23A11 11 0 0 0 21.5 6.5z" fill="#f4b400"/><circle cx="12" cy="12" r="5" fill="#fff"/><circle cx="12" cy="12" r="4" fill="#4285f4"/></svg>
<svg style="position:absolute;left:403px;top:736px;" width="30" height="24" viewBox="0 0 30 24"><g transform="scale(1.38)"><rect x="8" y="4" width="10" height="10.5" fill="#d8d8d8"/><rect x="8.5" y="4" width="9" height="1.5" fill="#b0b0b0"/>
<rect x="9" y="6" width="1.5" height="7" fill="#000"/><rect x="10.3" y="6.5" width="3" height="5.5" fill="#0000f0"/><rect x="10.5" y="7.8" width="1" height="1" fill="#3cf"/>
<rect x="14" y="6" width="2" height="9" fill="#a0a0a0"/><rect x="16.2" y="5.5" width="1.4" height="9" fill="#000"/>
<path d="M2.2 8.2h4.5l1 1v4.5l1 1.5H2.5l-.5-1.5z" fill="#000"/><path d="M5 9.5l.5 1.3 1.2.3-1 .7.3 1.2-1-.6-1 .6.3-1.2-1-.7 1.2-.3z" fill="#888"/>
<rect x="7" y="8.3" width="1.6" height="1.4" fill="#ff0"/><rect x="3.5" y="13.2" width="1.3" height="1.2" fill="#2cd"/><rect x="6.3" y="13.2" width="1.3" height="1.2" fill="#2a8"/></g></svg>
<svg style="position:absolute;left:1120px;top:742px;" width="14" height="10" viewBox="0 0 14 10"><path d="M1.5 8L7 2.5 12.5 8" stroke="#fff" stroke-width="1.3" fill="none"/></svg>
<svg style="position:absolute;left:1142px;top:742px;" width="18" height="13" viewBox="0 0 18 13"><rect x="5.5" y="3.5" width="11" height="7" fill="none" stroke="#fff" stroke-width="1.2"/><rect x="7" y="5" width="8" height="4" fill="#fff"/><path d="M2 1v3M4 1v3M1 4h4v2l-1 2H2L1 6zM3 8v4" stroke="#fff" stroke-width="1"/></svg>
<svg style="position:absolute;left:1169px;top:742px;" width="15" height="13" viewBox="0 0 15 13"><path d="M2 12a10 10 0 0 1 10-10M4.5 12a7.5 7.5 0 0 1 7.5-7.5M7 12a5 5 0 0 1 5-5" stroke="#fff" stroke-width="1" fill="none"/><circle cx="11" cy="11" r="1.5" fill="#fff"/></svg>
<svg style="position:absolute;left:1190px;top:741px;" width="19" height="14" viewBox="0 0 19 14"><path d="M1.5 4.5h3l4-3.5v12l-4-3.5h-3z" fill="none" stroke="#fff" stroke-width="1.1"/><path d="M11 5a3 3 0 0 1 0 4M13 3a6 6 0 0 1 0 8M15 1.5a8.5 8.5 0 0 1 0 11" stroke="#fff" stroke-width="1" fill="none"/></svg>
<div style="position:absolute;left:1218px;top:741.84px;font-size:12px;line-height:1;font-weight:400;color:#fff;white-space:pre;transform:scaleX(0.93);transform-origin:0 0;">РУС</div>
<div style="position:absolute;left:1266px;top:732.34px;font-size:12px;line-height:1;font-weight:400;color:#fff;white-space:pre;transform:scaleX(0.95);transform-origin:0 0;">11:05</div>
<div style="position:absolute;left:1253px;top:750.84px;font-size:12px;line-height:1;font-weight:400;color:#fff;white-space:pre;transform:scaleX(0.92);transform-origin:0 0;">23.12.2018</div>
<svg style="position:absolute;left:1324px;top:739px;" width="18" height="18" viewBox="0 0 18 18"><path d="M1.5 1.5h15v12h-5.5l-2 2.5-2-2.5H1.5z" fill="none" stroke="#fff" stroke-width="1.1"/></svg>
<div style="position:absolute;left:1361px;top:728px;width:1px;height:40px;background:#3a3d44"></div></body></html>
